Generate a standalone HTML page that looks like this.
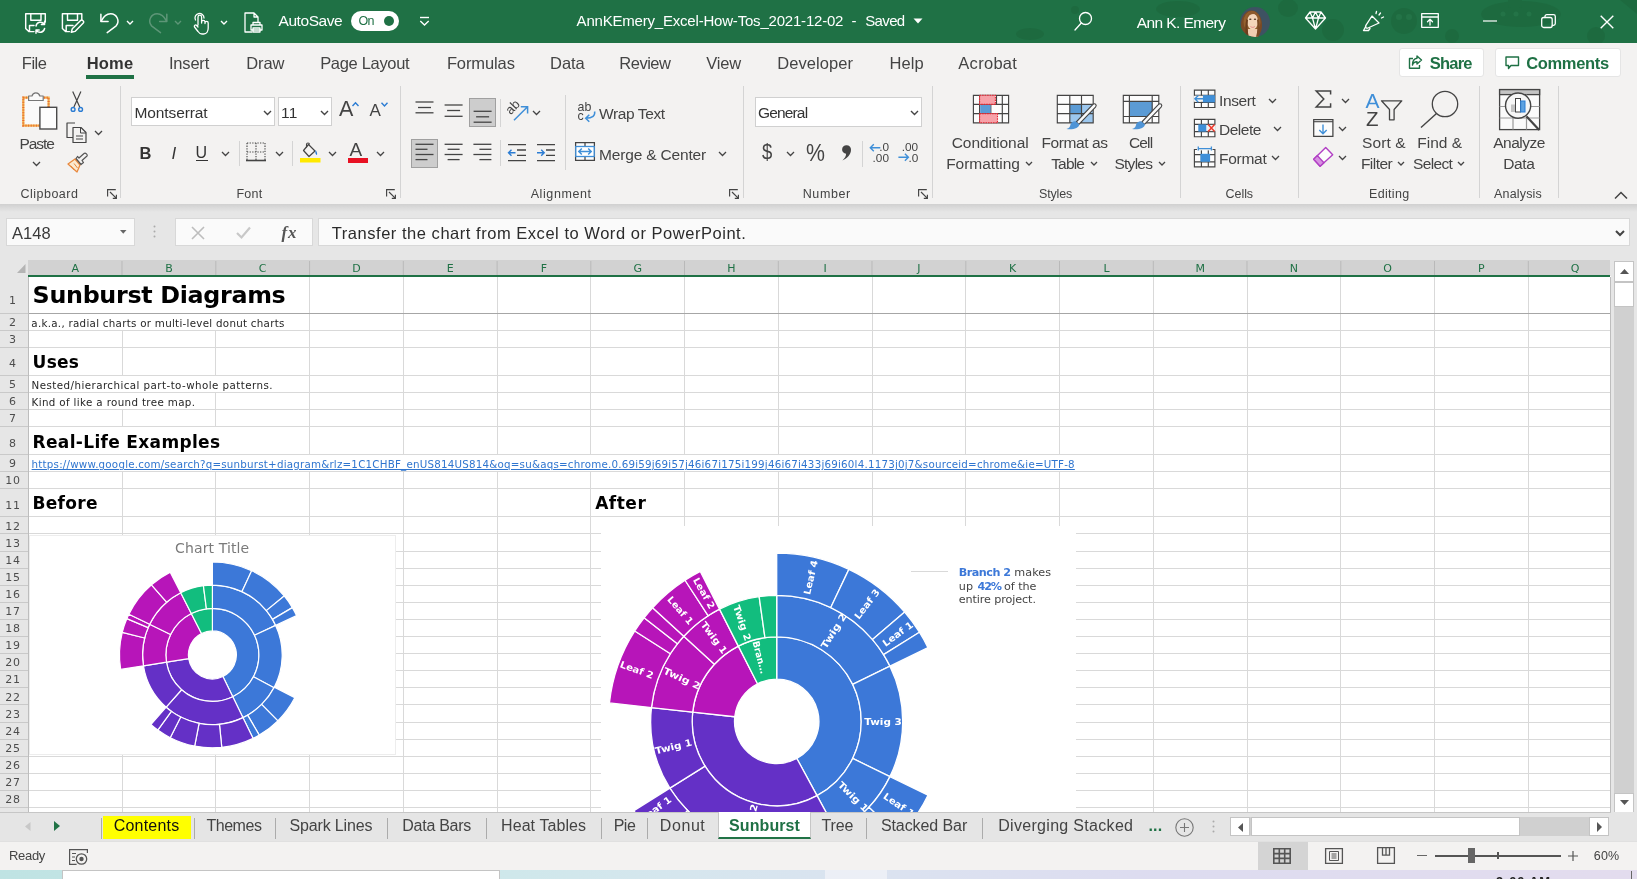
<!DOCTYPE html>
<html lang="en"><head><meta charset="utf-8"><title>Excel - Sunburst</title>
<style>
html,body{margin:0;padding:0}
body{width:1637px;height:879px;overflow:hidden;position:relative;background:#fff;font-family:"Liberation Sans",sans-serif}
.t{position:absolute;white-space:pre;display:block}
.b{position:absolute;display:block}
svg{overflow:visible}
#app{position:absolute;left:0;top:0;width:1637px;height:879px;will-change:transform}
</style></head>
<body>
<div id="app">
<div class="b" style="left:0.0px;top:0.0px;width:1637.0px;height:43.4px;background:#1f7145;"></div>
<div class="b" style="left:0.0px;top:43.3px;width:1637.0px;height:160.9px;background:#f3f2f1;"></div>
<div class="b" style="left:0.0px;top:204.2px;width:1637.0px;height:7.8px;background:linear-gradient(#d0d0d0,#e6e6e6);"></div>
<div class="b" style="left:0.0px;top:212.0px;width:1637.0px;height:48.0px;background:#e6e6e6;"></div>
<svg class="b" style="left:0.0px;top:0.0px;overflow:hidden;" width="1637" height="43" viewBox="0 0 1637 43"><g fill="#1c653b" opacity=".55"><ellipse cx="1521" cy="14" rx="40" ry="13"/><rect x="1508" y="-4" width="14" height="12" rx="3"/><circle cx="1404" cy="21" r="13"/><circle cx="1333" cy="30" r="11"/><ellipse cx="1288" cy="8" rx="10" ry="9"/><ellipse cx="1178" cy="9" rx="22" ry="8"/><circle cx="1452" cy="36" r="7"/><circle cx="1596" cy="36" r="9"/><ellipse cx="1030" cy="34" rx="14" ry="6"/><circle cx="1075" cy="10" r="4"/><path d="M1620 0l17 0 0 14z"/></g><g fill="#2a7d4f" opacity=".5"><circle cx="1503" cy="14" r="2.500"/><circle cx="1516" cy="14" r="2.500"/><circle cx="1529" cy="14" r="2.500"/><circle cx="1399" cy="17" r="3"/><circle cx="1409" cy="17" r="3"/></g></svg>
<svg class="b" style="left:0.0px;top:0.0px;" width="1" height="1" viewBox="0 0 1 1"><g fill="none" stroke="#fff" stroke-width="1.45" stroke-linejoin="round" stroke-linecap="round"><path d="M45.300 22V13.700H25.700V28.500L28.800 31.600H34M30.800 13.700V20.200H41V13.700M29.500 31.600V25.500H34"/><path d="M36 26a4.600 4.600 0 0 1 8.300-1.800M44.600 21.300v3.200h-3.200M44.600 28.500a4.600 4.600 0 0 1-8.300 1.800M36 33.300v-3.200h3.200"/></g></svg>
<svg class="b" style="left:0.0px;top:0.0px;" width="1" height="1" viewBox="0 0 1 1"><g fill="none" stroke="#fff" stroke-width="1.45" stroke-linejoin="round" stroke-linecap="round"><path d="M81.800 20V13.700H62.400V28.500L65.500 31.600H69.500M67.500 13.700V20.200H77.500V13.700M66.200 31.600V25.500H73"/><path d="M71.300 32.300l1-3.600 8.300-8.300a1.400 1.400 0 0 1 2 0l.7.700a1.400 1.400 0 0 1 0 2L75 31.400z"/></g></svg>
<svg class="b" style="left:0.0px;top:0.0px;" width="1" height="1" viewBox="0 0 1 1"><g fill="none" stroke="#fff" stroke-width="1.5" stroke-linejoin="round" stroke-linecap="round"><path d="M100.900 14.300V21.500H108.100"/><path d="M101.200 21.200C103.500 16.500 107 13.800 110.600 13.800a7.300 7.300 0 0 1 5.600 12L107.200 32.600"/></g></svg>
<svg class="b" style="left:125.7px;top:19.5px;" width="8" height="5.0" viewBox="0 0 8 5.0"><path d="M1 1 L4.0 4.0 L7 1" fill="none" stroke="#fff" stroke-width="1.4"/></svg>
<svg class="b" style="left:0.0px;top:0.0px;" width="1" height="1" viewBox="0 0 1 1"><g fill="none" stroke="#5d9677" stroke-width="1.500" stroke-linecap="round" stroke-linejoin="round"><path d="M166.800 14.300V21.500H159.600"/><path d="M166.500 21.200C164.200 16.500 160.700 13.800 157.100 13.800a7.300 7.300 0 0 0-5.600 12L160.500 32.600"/></g></svg>
<svg class="b" style="left:174.3px;top:19.5px;" width="8" height="5.0" viewBox="0 0 8 5.0"><path d="M1 1 L4.0 4.0 L7 1" fill="none" stroke="#5d9677" stroke-width="1.4"/></svg>
<svg class="b" style="left:192.5px;top:12.5px;" width="17" height="22" viewBox="0 0 17 22"><g fill="none" stroke="#fff" stroke-width="1.3" stroke-linejoin="round" stroke-linecap="round"><path d="M5 12V4a1.800 1.800 0 0 1 3.600 0v6M8.600 9a1.700 1.700 0 0 1 3.400 0v1.500M12 10a1.600 1.600 0 0 1 3.200 0v5c0 3-1.500 6-4.500 6H9c-2 0-3-1-4-2.500L1.500 14c-.8-1.500 1-2.800 2.200-1.500L5 14"/><path d="M2.500 7A4.500 4.500 0 1 1 11 5"/></g></svg>
<svg class="b" style="left:219.6px;top:19.5px;" width="8" height="5.0" viewBox="0 0 8 5.0"><path d="M1 1 L4.0 4.0 L7 1" fill="none" stroke="#fff" stroke-width="1.4"/></svg>
<svg class="b" style="left:244.0px;top:12.0px;" width="19" height="21" viewBox="0 0 19 21"><g fill="none" stroke="#fff" stroke-width="1.3" stroke-linejoin="round" stroke-linecap="round"><path d="M8 20H1V1h9l4 4v5M10 1v4h4"/><path d="M7 13h11v5H7zM9 13v-2.500h7V13M9 16h7v4H9z"/></g></svg>
<span class="t" style="left:278.5px;top:13.2px;font-size:15.5px;line-height:15.5px;color:#fff;letter-spacing:-0.43px;">AutoSave</span>
<div class="b" style="left:350.6px;top:10.5px;width:48.1px;height:20.1px;background:#fff;border-radius:10.05px;"></div>
<span class="t" style="left:358.6px;top:14.7px;font-size:12.5px;line-height:12.5px;color:#1f7145;letter-spacing:-0.79px;">On</span>
<div class="b" style="left:384.0px;top:15.6px;width:10.0px;height:10.0px;background:#1f7145;border-radius:5px;"></div>
<svg class="b" style="left:419.0px;top:16.0px;" width="11" height="10" viewBox="0 0 11 10"><path d="M1 1.500h9" stroke="#fff" stroke-width="1.400"/><path d="M1.300 5l4.200 4 4.200-4" fill="none" stroke="#fff" stroke-width="1.400"/></svg>
<span class="t" style="left:576.6px;top:13.0px;font-size:15px;line-height:15px;color:#fff;letter-spacing:-0.20px;">AnnKEmery_Excel-How-Tos_2021-12-02</span>
<span class="t" style="left:851.5px;top:13.0px;font-size:15px;line-height:15px;color:#fff;letter-spacing:1.00px;">-</span>
<span class="t" style="left:865.2px;top:13.0px;font-size:15px;line-height:15px;color:#fff;letter-spacing:-0.63px;">Saved</span>
<svg class="b" style="left:912.5px;top:18.0px;" width="10" height="6" viewBox="0 0 10 6"><path d="M0.500 0.500h9L5 5.500z" fill="#fff"/></svg>
<svg class="b" style="left:1074.0px;top:11.0px;" width="19" height="20" viewBox="0 0 19 20"><g fill="none" stroke="#fff" stroke-width="1.3" stroke-linejoin="round" stroke-linecap="round"><circle cx="11.500" cy="7.500" r="6"/><path d="M7.300 12L1 19"/></g></svg>
<span class="t" style="left:1136.7px;top:14.5px;font-size:15.5px;line-height:15.5px;color:#fff;letter-spacing:-0.58px;">Ann K. Emery</span>
<svg class="b" style="left:1240.0px;top:6.5px;" width="30" height="30" viewBox="0 0 30 30"><defs><clipPath id="av"><circle cx="15" cy="15" r="15"/></clipPath></defs><g clip-path="url(#av)"><rect width="30" height="30" fill="#3e5262"/><ellipse cx="11.500" cy="18" rx="10.500" ry="14.500" fill="#7b4a24"/><ellipse cx="12" cy="15" rx="8.500" ry="11" fill="#93602f"/><path d="M8 22h9.500v9H8z" fill="#efcdb0"/><ellipse cx="12.600" cy="14.500" rx="5.400" ry="8.200" fill="#f4d6ba"/><path d="M6.500 13c0-6 3-8.500 6.500-8.500 3 0 5.500 2 6 7-1.500-3-3.500-4.500-6-4.500-3 0-5 2-6.500 6z" fill="#8d5a2c"/><ellipse cx="10.300" cy="12.300" rx="1.200" ry=".8" fill="#4a3424"/><ellipse cx="15" cy="12.300" rx="1.200" ry=".8" fill="#4a3424"/><path d="M10.500 19.500c1.500 1.200 3 1.200 4.300 0" stroke="#e58a8a" stroke-width="1" fill="none"/><path d="M18.500 12c1.500 5 1.500 12 .5 18h-3c1.500-5 2-11 1-17z" fill="#7b4a24"/><path d="M6.500 12c-1.500 5-1.500 12-.500 18h3c-1.500-5-2-11-1-17z" fill="#6b3d1c"/></g></svg>
<svg class="b" style="left:1304.5px;top:11.0px;" width="21" height="19" viewBox="0 0 21 19"><g fill="none" stroke="#fff" stroke-width="1.3" stroke-linejoin="round" stroke-linecap="round"><path d="M5 1h11l4.500 6L10.500 18 .5 7zM.5 7h20M5 1l2.500 6 3 11 3-11L16 1M7.500 7l3-6 3 6"/></g></svg>
<svg class="b" style="left:1362.0px;top:10.0px;" width="23" height="22" viewBox="0 0 23 22"><g fill="none" stroke="#fff" stroke-width="1.3" stroke-linejoin="round" stroke-linecap="round"><path d="M10 6l7 7-11 5c-1.500.7-3-.8-2.300-2.300zM4 16l-2.500 4.500h5L8 18.500"/><path d="M17 5l1.500-2M19.500 8l2-1M14 3.500l.5-2"/></g></svg>
<svg class="b" style="left:1421.0px;top:13.0px;" width="18" height="15" viewBox="0 0 18 15"><g fill="none" stroke="#fff" stroke-width="1.3" stroke-linejoin="round" stroke-linecap="round"><path d="M.7.7h16.600v13.600H.7zM.7 4h16.600"/><path d="M9 12V6.500M6.500 8.800L9 6.300l2.500 2.500"/></g></svg>
<svg class="b" style="left:1483.0px;top:20.0px;" width="14" height="2" viewBox="0 0 14 2"><path d="M0 1h14" stroke="#fff" stroke-width="1.200"/></svg>
<svg class="b" style="left:1540.5px;top:14.0px;" width="15" height="14" viewBox="0 0 15 14"><g fill="none" stroke="#fff" stroke-width="1.3" stroke-linejoin="round" stroke-linecap="round"><rect x=".7" y="3.500" width="10.500" height="10" rx="2"/><path d="M4 3.500V2.500a1.800 1.800 0 0 1 1.800-1.800h6.700a1.800 1.800 0 0 1 1.800 1.800v7a1.800 1.800 0 0 1-1.800 1.800h-1.300"/></g></svg>
<svg class="b" style="left:1600.0px;top:14.5px;" width="14" height="14" viewBox="0 0 14 14"><path d="M.7.7l12.600 12.600M13.300.7L.7 13.300" stroke="#fff" stroke-width="1.400"/></svg>
<span class="t" style="left:21.8px;top:55.3px;font-size:16.5px;line-height:16.5px;color:#444;letter-spacing:-0.50px;">File</span>
<span class="t" style="left:169.0px;top:55.3px;font-size:16.5px;line-height:16.5px;color:#444;letter-spacing:-0.21px;">Insert</span>
<span class="t" style="left:246.3px;top:55.3px;font-size:16.5px;line-height:16.5px;color:#444;letter-spacing:-0.13px;">Draw</span>
<span class="t" style="left:320.2px;top:55.3px;font-size:16.5px;line-height:16.5px;color:#444;letter-spacing:-0.32px;">Page Layout</span>
<span class="t" style="left:446.9px;top:55.3px;font-size:16.5px;line-height:16.5px;color:#444;letter-spacing:-0.11px;">Formulas</span>
<span class="t" style="left:550.0px;top:55.3px;font-size:16.5px;line-height:16.5px;color:#444;letter-spacing:-0.04px;">Data</span>
<span class="t" style="left:619.3px;top:55.3px;font-size:16.5px;line-height:16.5px;color:#444;letter-spacing:-0.50px;">Review</span>
<span class="t" style="left:706.3px;top:55.3px;font-size:16.5px;line-height:16.5px;color:#444;letter-spacing:-0.19px;">View</span>
<span class="t" style="left:777.2px;top:55.3px;font-size:16.5px;line-height:16.5px;color:#444;letter-spacing:0.09px;">Developer</span>
<span class="t" style="left:889.5px;top:55.3px;font-size:16.5px;line-height:16.5px;color:#444;letter-spacing:0.07px;">Help</span>
<span class="t" style="left:958.3px;top:55.3px;font-size:16.5px;line-height:16.5px;color:#444;letter-spacing:0.29px;">Acrobat</span>
<span class="t" style="left:86.7px;top:55.3px;font-size:16.5px;line-height:16.5px;color:#333;letter-spacing:0.21px;font-weight:700;">Home</span>
<div class="b" style="left:86.4px;top:75.3px;width:48.0px;height:3.3px;background:#1f7145;"></div>
<div class="b" style="left:1398.8px;top:47.7px;width:85.4px;height:29.6px;background:#fff;border:1px solid #e5e5e5;box-sizing:border-box;border-radius:3px;"></div>
<div class="b" style="left:1495.3px;top:47.7px;width:126.0px;height:29.6px;background:#fff;border:1px solid #e5e5e5;box-sizing:border-box;border-radius:3px;"></div>
<svg class="b" style="left:1408.0px;top:55.0px;" width="15" height="14" viewBox="0 0 15 14"><g fill="none" stroke="#1f7145" stroke-width="1.400" stroke-linejoin="round"><path d="M5 3.500H1.500v9.800h10V10"/><path d="M9 1l4.500 4L9 9V6.800C6.500 6.800 5 8 4.500 10 4.500 6 6 3.500 9 3.200z"/></g></svg>
<span class="t" style="left:1429.7px;top:54.9px;font-size:16.5px;line-height:16.5px;color:#1f7145;letter-spacing:-0.77px;font-weight:700;">Share</span>
<svg class="b" style="left:1505.0px;top:55.5px;" width="15" height="14" viewBox="0 0 15 14"><path d="M1 1h12.500v8.500H6L3.500 12.500V9.500H1z" fill="none" stroke="#1f7145" stroke-width="1.400" stroke-linejoin="round"/></svg>
<span class="t" style="left:1526.2px;top:54.9px;font-size:16.5px;line-height:16.5px;color:#1f7145;letter-spacing:-0.33px;font-weight:700;">Comments</span>
<div class="b" style="left:120.0px;top:86.0px;width:1.0px;height:111.5px;background:#d4d4d4;"></div>
<div class="b" style="left:399.8px;top:86.0px;width:1.0px;height:111.5px;background:#d4d4d4;"></div>
<div class="b" style="left:743.4px;top:86.0px;width:1.0px;height:111.5px;background:#d4d4d4;"></div>
<div class="b" style="left:931.9px;top:86.0px;width:1.0px;height:111.5px;background:#d4d4d4;"></div>
<div class="b" style="left:1180.1px;top:86.0px;width:1.0px;height:111.5px;background:#d4d4d4;"></div>
<div class="b" style="left:1298.1px;top:86.0px;width:1.0px;height:111.5px;background:#d4d4d4;"></div>
<div class="b" style="left:1479.1px;top:86.0px;width:1.0px;height:111.5px;background:#d4d4d4;"></div>
<div class="b" style="left:1557.8px;top:86.0px;width:1.0px;height:111.5px;background:#d4d4d4;"></div>
<svg class="b" style="left:0.0px;top:0.0px;" width="1" height="1" viewBox="0 0 1 1"><rect x="23.300" y="97.600" width="25.300" height="28" fill="#fafafa" stroke="#f2b24a" stroke-width="2.200"/><rect x="23.300" y="97.600" width="25.300" height="28" fill="none" stroke="#e5502a" stroke-width="2.200" stroke-dasharray="1 1.600" opacity=".75"/><path d="M28.600 100.500V96h3.400a4 4 0 0 1 7.800 0h3.400v4.500z" fill="#fafafa" stroke="#777" stroke-width="1.200" stroke-linejoin="round"/><rect x="39.900" y="107.300" width="16.800" height="21.700" fill="#fdfdfd" stroke="#4a4a4a" stroke-width="1.400"/></svg>
<span class="t" style="left:19.6px;top:136.1px;font-size:15.5px;line-height:15.5px;color:#444;letter-spacing:-1.11px;">Paste</span>
<svg class="b" style="left:31.5px;top:160.8px;" width="9" height="5.5" viewBox="0 0 9 5.5"><path d="M1 1 L4.5 4.5 L8 1" fill="none" stroke="#444" stroke-width="1.3"/></svg>
<svg class="b" style="left:0.0px;top:0.0px;" width="1" height="1" viewBox="0 0 1 1"><path d="M72.700 91.500l7 15.500M80.900 91.500l-7 15.500" stroke="#444" stroke-width="1.200" fill="none"/><circle cx="73.100" cy="109.400" r="1.900" fill="none" stroke="#2b7cd3" stroke-width="1.400"/><circle cx="80.600" cy="109.400" r="1.900" fill="none" stroke="#2b7cd3" stroke-width="1.400"/></svg>
<svg class="b" style="left:66.0px;top:122.0px;" width="23" height="21" viewBox="0 0 23 21"><g fill="none" stroke="#444" stroke-width="1.2" stroke-linejoin="round" stroke-linecap="butt"><path d="M7 15.500H1V1h8M7 5.500h8l5 5V20.500H7z" fill="#f3f2f1"/><path d="M14.500 5.500v5.500h5.500M10 14h7M10 17h7" stroke-width="1"/></g></svg>
<svg class="b" style="left:94.0px;top:130.2px;" width="9" height="5.5" viewBox="0 0 9 5.5"><path d="M1 1 L4.5 4.5 L8 1" fill="none" stroke="#444" stroke-width="1.3"/></svg>
<svg class="b" style="left:66.0px;top:151.0px;" width="23" height="22" viewBox="0 0 23 22"><path d="M2 13l7-5 5 6-3 7z" fill="#fbe9cf" stroke="#e8883d" stroke-width="1.300" stroke-linejoin="round"/><path d="M5 15l3 4M8 12.500l3.500 4.500" stroke="#e8883d" stroke-width="1"/><path d="M10 7.500l5 6 2.500-2-1.500-2 5-4.500c1-1-1.500-4-3-2.500l-5 4.500-1.500-1.500z" fill="#f3f2f1" stroke="#555" stroke-width="1.200" stroke-linejoin="round"/></svg>
<span class="t" style="left:20.5px;top:187.6px;font-size:12.5px;line-height:12.5px;color:#444;letter-spacing:0.48px;">Clipboard</span>
<svg class="b" style="left:106.5px;top:188.8px;" width="10" height="10" viewBox="0 0 10 10"><path d="M.6 7.500V.6h8.200M3 3l6.200 6.200M5.800 9.400h3.600V5.800" fill="none" stroke="#444" stroke-width="1.150"/></svg>
<div class="b" style="left:131.0px;top:97.3px;width:144.3px;height:29.2px;background:#fff;border:1px solid #d0d0d0;box-sizing:border-box;"></div>
<div class="b" style="left:278.0px;top:97.3px;width:54.3px;height:29.2px;background:#fff;border:1px solid #d0d0d0;box-sizing:border-box;"></div>
<span class="t" style="left:134.5px;top:105.4px;font-size:15.5px;line-height:15.5px;color:#333;letter-spacing:-0.11px;">Montserrat</span>
<svg class="b" style="left:263.0px;top:110.2px;" width="9" height="5.5" viewBox="0 0 9 5.5"><path d="M1 1 L4.5 4.5 L8 1" fill="none" stroke="#444" stroke-width="1.4"/></svg>
<span class="t" style="left:281.0px;top:105.4px;font-size:15.5px;line-height:15.5px;color:#333;letter-spacing:0.20px;">11</span>
<svg class="b" style="left:319.5px;top:110.2px;" width="9" height="5.5" viewBox="0 0 9 5.5"><path d="M1 1 L4.5 4.5 L8 1" fill="none" stroke="#444" stroke-width="1.4"/></svg>
<span class="t" style="left:339.0px;top:98.6px;font-size:21.5px;line-height:21.5px;color:#444;letter-spacing:-0.34px;">A</span>
<svg class="b" style="left:351.5px;top:102.3px;" width="7" height="4.5" viewBox="0 0 7 4.5"><path d="M.5 4L3.500.8 6.500 4" fill="none" stroke="#2b7cd3" stroke-width="1.400"/></svg>
<span class="t" style="left:369.5px;top:102.4px;font-size:17px;line-height:17px;color:#444;letter-spacing:0.16px;">A</span>
<svg class="b" style="left:380.5px;top:102.0px;" width="7" height="4.5" viewBox="0 0 7 4.5"><path d="M.5.8L3.500 4 6.500.8" fill="none" stroke="#2b7cd3" stroke-width="1.400"/></svg>
<span class="t" style="left:139.5px;top:145.0px;font-size:16.5px;line-height:16.5px;color:#333;letter-spacing:-0.92px;font-weight:700;">B</span>
<span class="t" style="left:171.5px;top:144.6px;font-size:17px;line-height:17px;color:#333;letter-spacing:0.78px;font-style:italic;">I</span>
<span class="t" style="left:195.5px;top:144.5px;font-size:16px;line-height:16px;color:#333;letter-spacing:0.45px;">U</span>
<div class="b" style="left:195.5px;top:160.0px;width:12.0px;height:1.2px;background:#333;"></div>
<svg class="b" style="left:220.5px;top:150.8px;" width="9" height="5.5" viewBox="0 0 9 5.5"><path d="M1 1 L4.5 4.5 L8 1" fill="none" stroke="#444" stroke-width="1.3"/></svg>
<div class="b" style="left:239.0px;top:141.0px;width:1.0px;height:25.0px;background:#d4d4d4;"></div>
<svg class="b" style="left:246.0px;top:142.0px;" width="20" height="20" viewBox="0 0 20 20"><path d="M1 1h18M1 10h18M10 1v17M1 1v17M19 1v17" stroke="#4a4a4a" stroke-width="1.150" stroke-dasharray="1.300 1.300" fill="none"/><path d="M0 18.500h20" stroke="#444" stroke-width="1.600"/></svg>
<svg class="b" style="left:274.5px;top:150.8px;" width="9" height="5.5" viewBox="0 0 9 5.5"><path d="M1 1 L4.5 4.5 L8 1" fill="none" stroke="#444" stroke-width="1.3"/></svg>
<div class="b" style="left:292.0px;top:141.0px;width:1.0px;height:25.0px;background:#d4d4d4;"></div>
<svg class="b" style="left:300.0px;top:142.0px;" width="21" height="21" viewBox="0 0 21 21"><path d="M8.500 2.500l6.500 6.500-6 5.500-5.500-6z" fill="none" stroke="#444" stroke-width="1.200" stroke-linejoin="round"/><path d="M6.500 5.500V2.500a1.500 1.500 0 0 1 3 0" fill="none" stroke="#444" stroke-width="1.100"/><path d="M15.500 8c1 1 2 3 1.500 5-1.500-.5-2-2-1.500-5z" fill="#2b7cd3"/><rect x="0" y="16" width="20.500" height="4.500" fill="#ffe900"/></svg>
<svg class="b" style="left:328.0px;top:150.8px;" width="9" height="5.5" viewBox="0 0 9 5.5"><path d="M1 1 L4.5 4.5 L8 1" fill="none" stroke="#444" stroke-width="1.3"/></svg>
<span class="t" style="left:349.5px;top:139.9px;font-size:19px;line-height:19px;color:#444;letter-spacing:3.33px;">A</span>
<div class="b" style="left:347.5px;top:158.0px;width:20.5px;height:4.5px;background:#e81123;"></div>
<svg class="b" style="left:375.5px;top:150.8px;" width="9" height="5.5" viewBox="0 0 9 5.5"><path d="M1 1 L4.5 4.5 L8 1" fill="none" stroke="#444" stroke-width="1.3"/></svg>
<span class="t" style="left:236.5px;top:187.6px;font-size:12.5px;line-height:12.5px;color:#444;letter-spacing:0.20px;">Font</span>
<svg class="b" style="left:385.5px;top:188.8px;" width="10" height="10" viewBox="0 0 10 10"><path d="M.6 7.500V.6h8.200M3 3l6.200 6.200M5.800 9.400h3.600V5.800" fill="none" stroke="#444" stroke-width="1.150"/></svg>
<div class="b" style="left:469.4px;top:98.3px;width:26.3px;height:28.5px;background:#cdcdcd;border:1px solid #a0a0a0;box-sizing:border-box;"></div>
<div class="b" style="left:411.3px;top:139.4px;width:26.7px;height:28.3px;background:#cdcdcd;border:1px solid #a0a0a0;box-sizing:border-box;"></div>
<svg class="b" style="left:0.0px;top:0.0px;" width="1" height="1" viewBox="0 0 1 1"><path d="M415.5 102h18" stroke="#444" stroke-width="1.300"/><path d="M418.0 107.5h13" stroke="#444" stroke-width="1.300"/><path d="M415.5 112.8h18" stroke="#444" stroke-width="1.300"/></svg>
<svg class="b" style="left:0.0px;top:0.0px;" width="1" height="1" viewBox="0 0 1 1"><path d="M444.6 105h18" stroke="#444" stroke-width="1.300"/><path d="M447.1 110.5h13" stroke="#444" stroke-width="1.300"/><path d="M444.6 116.3h18" stroke="#444" stroke-width="1.300"/></svg>
<svg class="b" style="left:0.0px;top:0.0px;" width="1" height="1" viewBox="0 0 1 1"><path d="M473.6 111.3h18" stroke="#444" stroke-width="1.300"/><path d="M476.1 116.8h13" stroke="#444" stroke-width="1.300"/><path d="M473.6 122.2h18" stroke="#444" stroke-width="1.300"/></svg>
<svg class="b" style="left:0.0px;top:0.0px;" width="1" height="1" viewBox="0 0 1 1"><path d="M415.5 144.3h18" stroke="#444" stroke-width="1.300"/><path d="M415.5 149.3h12" stroke="#444" stroke-width="1.300"/><path d="M415.5 154.5h18" stroke="#444" stroke-width="1.300"/><path d="M415.5 159.6h12" stroke="#444" stroke-width="1.300"/></svg>
<svg class="b" style="left:0.0px;top:0.0px;" width="1" height="1" viewBox="0 0 1 1"><path d="M444.6 144.3h18" stroke="#444" stroke-width="1.300"/><path d="M447.6 149.3h12" stroke="#444" stroke-width="1.300"/><path d="M444.6 154.5h18" stroke="#444" stroke-width="1.300"/><path d="M447.6 159.6h12" stroke="#444" stroke-width="1.300"/></svg>
<svg class="b" style="left:0.0px;top:0.0px;" width="1" height="1" viewBox="0 0 1 1"><path d="M473.4 144.3h18" stroke="#444" stroke-width="1.300"/><path d="M479.4 149.3h12" stroke="#444" stroke-width="1.300"/><path d="M473.4 154.5h18" stroke="#444" stroke-width="1.300"/><path d="M479.4 159.6h12" stroke="#444" stroke-width="1.300"/></svg>
<div class="b" style="left:500.2px;top:98.5px;width:1.0px;height:28.0px;background:#d4d4d4;"></div>
<div class="b" style="left:500.2px;top:140.0px;width:1.0px;height:26.0px;background:#d4d4d4;"></div>
<svg class="b" style="left:0.0px;top:0.0px;" width="1" height="1" viewBox="0 0 1 1"><text x="510.800" y="115.300" transform="rotate(-47 510.800 115.300)" font-size="13" fill="#444" font-family="Liberation Sans,sans-serif">ab</text><path d="M514 120.300L527.300 107M520.800 106.700h6.800v6.800" fill="none" stroke="#3f8fd8" stroke-width="1.500"/></svg>
<svg class="b" style="left:532.0px;top:109.8px;" width="9" height="5.5" viewBox="0 0 9 5.5"><path d="M1 1 L4.5 4.5 L8 1" fill="none" stroke="#444" stroke-width="1.3"/></svg>
<svg class="b" style="left:508.0px;top:142.0px;" width="18" height="21" viewBox="0 0 18 21"><path d="M0 2.600h18M9 8h9M9 13.400h9M0 18.600h18" stroke="#444" stroke-width="1.300"/><path d="M.5 10.700h7M3.500 7.700l-3 3 3 3" fill="none" stroke="#2b7cd3" stroke-width="1.400"/></svg>
<svg class="b" style="left:537.3px;top:142.0px;" width="18" height="21" viewBox="0 0 18 21"><path d="M0 2.600h18M9 8h9M9 13.400h9M0 18.600h18" stroke="#444" stroke-width="1.300"/><path d="M0 10.700h7M4.200 7.700l3 3-3 3" fill="none" stroke="#2b7cd3" stroke-width="1.400"/></svg>
<div class="b" style="left:564.8px;top:95.0px;width:1.0px;height:75.0px;background:#d4d4d4;"></div>
<svg class="b" style="left:0.0px;top:0.0px;" width="1" height="1" viewBox="0 0 1 1"><text x="577.600" y="110.700" font-size="12.400" fill="#444" font-family="Liberation Sans,sans-serif">ab</text><text x="577.600" y="120.400" font-size="12.400" fill="#444" font-family="Liberation Sans,sans-serif">c</text><path d="M594.600 111.500c.8 3.800-2 6.800-8.600 6.800M589.300 114.800l-3.600 3.500 3.600 3.500" fill="none" stroke="#3f8fd8" stroke-width="1.500"/></svg>
<span class="t" style="left:599.0px;top:105.7px;font-size:15.5px;line-height:15.5px;color:#444;letter-spacing:-0.39px;">Wrap Text</span>
<svg class="b" style="left:574.5px;top:142.4px;" width="20" height="19" viewBox="0 0 20 19"><rect x=".6" y=".6" width="18.800" height="17.800" fill="#fcfcfc"/><path d="M.6.6h18.800v17.800H.6zM10 .6v4M10 14.400v4" fill="none" stroke="#444" stroke-width="1.250"/><rect x=".8" y="4.500" width="18.400" height="10" fill="#fff" stroke="#3f8fd8" stroke-width="1.300"/><path d="M3.800 9.500h12.400M6.800 6.500l-3 3 3 3M13.200 6.500l3 3-3 3" fill="none" stroke="#3f8fd8" stroke-width="1.500"/></svg>
<span class="t" style="left:599.0px;top:146.5px;font-size:15.5px;line-height:15.5px;color:#444;letter-spacing:-0.17px;">Merge &amp; Center</span>
<svg class="b" style="left:718.1px;top:150.8px;" width="9" height="5.5" viewBox="0 0 9 5.5"><path d="M1 1 L4.5 4.5 L8 1" fill="none" stroke="#444" stroke-width="1.3"/></svg>
<span class="t" style="left:530.7px;top:187.6px;font-size:12.5px;line-height:12.5px;color:#444;letter-spacing:0.59px;">Alignment</span>
<svg class="b" style="left:729.0px;top:188.8px;" width="10" height="10" viewBox="0 0 10 10"><path d="M.6 7.500V.6h8.200M3 3l6.200 6.200M5.800 9.400h3.600V5.800" fill="none" stroke="#444" stroke-width="1.150"/></svg>
<div class="b" style="left:754.6px;top:97.3px;width:167.6px;height:29.4px;background:#fff;border:1px solid #d0d0d0;box-sizing:border-box;"></div>
<span class="t" style="left:757.9px;top:104.8px;font-size:15.5px;line-height:15.5px;color:#333;letter-spacing:-0.82px;">General</span>
<svg class="b" style="left:910.0px;top:110.2px;" width="9" height="5.5" viewBox="0 0 9 5.5"><path d="M1 1 L4.5 4.5 L8 1" fill="none" stroke="#444" stroke-width="1.4"/></svg>
<span class="t" style="left:762.3px;top:141.3px;font-size:22.5px;line-height:22.5px;color:#444;letter-spacing:0.00px;transform:scaleX(.82);transform-origin:0 0;">$</span>
<svg class="b" style="left:785.8px;top:150.8px;" width="9" height="5.5" viewBox="0 0 9 5.5"><path d="M1 1 L4.5 4.5 L8 1" fill="none" stroke="#444" stroke-width="1.3"/></svg>
<span class="t" style="left:806.3px;top:140.9px;font-size:24.5px;line-height:24.5px;color:#444;letter-spacing:0.00px;transform:scaleX(.87);transform-origin:0 0;">%</span>
<svg class="b" style="left:840.5px;top:145.2px;" width="11" height="17" viewBox="0 0 11 17"><path d="M5.600 .2a4.300 4.300 0 0 1 4.400 4.500c0 4.600-3.400 8.500-8.600 10.800 2.400-2.300 3.700-4.300 3.700-6.800A4.100 4.100 0 0 1 5.600 .2z" fill="#444"/></svg>
<div class="b" style="left:861.8px;top:140.5px;width:1.0px;height:26.0px;background:#d4d4d4;"></div>
<svg class="b" style="left:0.0px;top:0.0px;" width="1" height="1" viewBox="0 0 1 1"><path d="M870.300 147.800h10M873.800 144.300l-3.500 3.500 3.500 3.500" fill="none" stroke="#3f8fd8" stroke-width="1.400"/><text x="879.300" y="151" font-size="11.800" fill="#444" font-family="Liberation Sans,sans-serif">.0</text><text x="872.600" y="162" font-size="11.800" fill="#444" font-family="Liberation Sans,sans-serif">.00</text></svg>
<svg class="b" style="left:0.0px;top:0.0px;" width="1" height="1" viewBox="0 0 1 1"><text x="901.700" y="151" font-size="11.800" fill="#444" font-family="Liberation Sans,sans-serif">.00</text><path d="M898.400 157.300h10M904.900 153.800l3.500 3.500-3.500 3.500" fill="none" stroke="#3f8fd8" stroke-width="1.400"/><text x="908.400" y="162" font-size="11.800" fill="#444" font-family="Liberation Sans,sans-serif">.0</text></svg>
<span class="t" style="left:802.7px;top:187.6px;font-size:12.5px;line-height:12.5px;color:#444;letter-spacing:0.61px;">Number</span>
<svg class="b" style="left:917.5px;top:188.8px;" width="10" height="10" viewBox="0 0 10 10"><path d="M.6 7.500V.6h8.200M3 3l6.200 6.200M5.800 9.400h3.600V5.800" fill="none" stroke="#444" stroke-width="1.150"/></svg>
<svg class="b" style="left:0.0px;top:0.0px;" width="1" height="1" viewBox="0 0 1 1"><rect x="973.400" y="95.300" width="35.200" height="27.500" fill="#fcfcfc"/><path d="M973.400 95.300h35.200v27.500h-35.200zM973.400 104.400h35.200M973.400 113.600h35.200M979.600 95.300v27.500M990.800 104.400v9.200M1002.300 95.300v27.500M996.500 95.300v9.100" fill="none" stroke="#444" stroke-width="1.150"/><rect x="979.600" y="95.300" width="15.800" height="9.100" fill="#f7a1a8" stroke="#e8222e" stroke-width="1.100" stroke-dasharray="1.600 .9"/><rect x="979.600" y="113.600" width="17.900" height="9.200" fill="#f7a1a8" stroke="#e8222e" stroke-width="1.100" stroke-dasharray="1.600 .9"/><rect x="980.200" y="105" width="10.400" height="8" fill="#5b9bd5"/></svg>
<span class="t" style="left:951.7px;top:135.1px;font-size:15.5px;line-height:15.5px;color:#444;letter-spacing:-0.06px;">Conditional</span>
<span class="t" style="left:946.2px;top:155.7px;font-size:15.5px;line-height:15.5px;color:#444;letter-spacing:-0.05px;">Formatting</span>
<svg class="b" style="left:1025.2px;top:160.5px;" width="8" height="5.0" viewBox="0 0 8 5.0"><path d="M1 1 L4.0 4.0 L7 1" fill="none" stroke="#444" stroke-width="1.3"/></svg>
<svg class="b" style="left:0.0px;top:0.0px;" width="1" height="1" viewBox="0 0 1 1"><rect x="1057.300" y="95.300" width="35.900" height="27.500" fill="#fcfcfc"/><rect x="1069.800" y="104.400" width="23.400" height="18.400" fill="#9cc7ee"/><rect x="1069.800" y="104.400" width="11.700" height="9.200" fill="#5b9bd5"/><path d="M1057.300 95.300h35.900v27.500h-35.900zM1057.300 104.400h35.900M1057.300 113.600h35.900M1069.800 95.300v27.500M1081.500 95.300v27.500" fill="none" stroke="#444" stroke-width="1.150"/><path d="M1095.6 104.200c.8.800.700 2-.100 3L1078.9 124.300l-2.700-2.300L1092.7 104.700c.800-.900 2-1.200 2.900-.500z" fill="#fafafa" stroke="#444" stroke-width="1.100" stroke-linejoin="round"/><path d="M1075.6 121.200l3.800 3.300c-.600 3.400-5.400 5.400-13 4.600 3.200-1.200 3.600-2.700 4.100-4.700.600-2 2.700-3.400 5.100-3.200z" fill="#4f94d6"/></svg>
<span class="t" style="left:1041.5px;top:135.1px;font-size:15.5px;line-height:15.5px;color:#444;letter-spacing:-0.42px;">Format as</span>
<span class="t" style="left:1051.2px;top:155.7px;font-size:15.5px;line-height:15.5px;color:#444;letter-spacing:-0.83px;">Table</span>
<svg class="b" style="left:1089.8px;top:160.5px;" width="8" height="5.0" viewBox="0 0 8 5.0"><path d="M1 1 L4.0 4.0 L7 1" fill="none" stroke="#444" stroke-width="1.3"/></svg>
<svg class="b" style="left:0.0px;top:0.0px;" width="1" height="1" viewBox="0 0 1 1"><rect x="1123.300" y="95.300" width="35.500" height="27.500" fill="#fcfcfc"/><rect x="1129.400" y="101.400" width="22.800" height="15.100" fill="#5b9bd5"/><path d="M1123.300 95.300h35.500v27.500h-35.500zM1123.300 101.400h35.500M1123.300 116.500h35.500M1129.400 95.300v27.500M1152.200 95.300v27.500" fill="none" stroke="#444" stroke-width="1.150"/><path d="M1161.2 104.200c.8.800.700 2-.100 3L1144.5 124.300l-2.700-2.300L1158.3 104.700c.800-.900 2-1.200 2.900-.500z" fill="#fafafa" stroke="#444" stroke-width="1.100" stroke-linejoin="round"/><path d="M1141.2 121.200l3.800 3.300c-.600 3.400-5.400 5.400-13 4.600 3.200-1.200 3.600-2.700 4.100-4.700.600-2 2.700-3.400 5.100-3.200z" fill="#4f94d6"/></svg>
<span class="t" style="left:1129.0px;top:135.1px;font-size:15.5px;line-height:15.5px;color:#444;letter-spacing:-0.85px;">Cell</span>
<span class="t" style="left:1114.4px;top:155.7px;font-size:15.5px;line-height:15.5px;color:#444;letter-spacing:-0.72px;">Styles</span>
<svg class="b" style="left:1158.0px;top:160.5px;" width="8" height="5.0" viewBox="0 0 8 5.0"><path d="M1 1 L4.0 4.0 L7 1" fill="none" stroke="#444" stroke-width="1.3"/></svg>
<span class="t" style="left:1039.0px;top:187.6px;font-size:12.5px;line-height:12.5px;color:#444;letter-spacing:-0.17px;">Styles</span>
<svg class="b" style="left:0.0px;top:0.0px;" width="1" height="1" viewBox="0 0 1 1"><rect x="1194.4" y="90.1" width="20.5" height="17.400" fill="#fcfcfc"/><path d="M1194.4 90.1H1214.9V107.5H1194.4zM1194.4 95.2H1214.9M1194.4 102.4H1214.9M1201.400 90.1V107.5M1208.300 90.1V107.5" fill="none" stroke="#444" stroke-width="1.150"/><rect x="1193.500" y="95.800" width="9" height="6" fill="#f3f2f1"/><rect x="1202.900" y="95.200" width="12" height="7.200" fill="#3f8fd8"/><path d="M1194.900 98.800H1207M1198.300 95.400l-3.400 3.400 3.400 3.400" fill="none" stroke="#3f8fd8" stroke-width="1.400"/></svg>
<span class="t" style="left:1219.1px;top:93.4px;font-size:15.5px;line-height:15.5px;color:#444;letter-spacing:-0.41px;">Insert</span>
<svg class="b" style="left:1267.6px;top:97.8px;" width="9" height="5.5" viewBox="0 0 9 5.5"><path d="M1 1 L4.5 4.5 L8 1" fill="none" stroke="#444" stroke-width="1.3"/></svg>
<svg class="b" style="left:0.0px;top:0.0px;" width="1" height="1" viewBox="0 0 1 1"><rect x="1194.4" y="119.3" width="20.5" height="17.400" fill="#fcfcfc"/><path d="M1194.4 119.3H1214.9V136.7H1194.4zM1194.4 124.4H1214.9M1194.4 131.6H1214.9M1201.400 119.3V136.7M1208.300 119.3V136.7" fill="none" stroke="#444" stroke-width="1.150"/><rect x="1206.800" y="124.900" width="9" height="6.200" fill="#f3f2f1"/><rect x="1198.300" y="124.400" width="8" height="7.200" fill="#3f8fd8"/><path d="M1208.200 124.600l6.400 6.800M1214.600 124.600l-6.400 6.800" stroke="#f0392b" stroke-width="1.500"/></svg>
<span class="t" style="left:1219.0px;top:122.2px;font-size:15.5px;line-height:15.5px;color:#444;letter-spacing:-0.47px;">Delete</span>
<svg class="b" style="left:1272.7px;top:126.2px;" width="9" height="5.5" viewBox="0 0 9 5.5"><path d="M1 1 L4.5 4.5 L8 1" fill="none" stroke="#444" stroke-width="1.3"/></svg>
<svg class="b" style="left:0.0px;top:0.0px;" width="1" height="1" viewBox="0 0 1 1"><rect x="1194.4" y="149.5" width="20.5" height="17.400" fill="#fcfcfc"/><path d="M1194.4 149.5H1214.9V166.9H1194.4zM1194.4 154.6H1214.9M1194.4 161.8H1214.9M1201.400 149.5V166.9M1208.300 149.5V166.9" fill="none" stroke="#444" stroke-width="1.150"/><rect x="1200.400" y="153.800" width="9.700" height="8" fill="#3f8fd8"/><rect x="1197" y="146" width="15.500" height="4.400" fill="#f3f2f1"/><path d="M1198.300 148.600H1211.400M1198.300 146.600v4M1211.400 146.600v4" stroke="#3f8fd8" stroke-width="1.300" fill="none"/></svg>
<span class="t" style="left:1219.0px;top:150.7px;font-size:15.5px;line-height:15.5px;color:#444;letter-spacing:-0.27px;">Format</span>
<svg class="b" style="left:1271.3px;top:154.8px;" width="9" height="5.5" viewBox="0 0 9 5.5"><path d="M1 1 L4.5 4.5 L8 1" fill="none" stroke="#444" stroke-width="1.3"/></svg>
<span class="t" style="left:1225.5px;top:187.6px;font-size:12.5px;line-height:12.5px;color:#444;letter-spacing:-0.04px;">Cells</span>
<svg class="b" style="left:0.0px;top:0.0px;" width="1" height="1" viewBox="0 0 1 1"><path d="M1330.600 94.500V90.900H1316.200l7.600 8-7.600 8H1330.600v-3.600" fill="none" stroke="#444" stroke-width="1.500" stroke-linejoin="miter"/></svg>
<svg class="b" style="left:1340.8px;top:97.8px;" width="9" height="5.5" viewBox="0 0 9 5.5"><path d="M1 1 L4.5 4.5 L8 1" fill="none" stroke="#444" stroke-width="1.3"/></svg>
<svg class="b" style="left:0.0px;top:0.0px;" width="1" height="1" viewBox="0 0 1 1"><path d="M1313.700 119.500h19.200v16.800h-19.200z" fill="#fcfcfc" stroke="#444" stroke-width="1.250"/><path d="M1313.700 121.700h19.200" stroke="#444" stroke-width="1.100"/><path d="M1323 124.400v9M1319.300 130l3.700 3.700 3.700-3.700" fill="none" stroke="#3f8fd8" stroke-width="1.400"/></svg>
<svg class="b" style="left:1338.0px;top:126.2px;" width="9" height="5.5" viewBox="0 0 9 5.5"><path d="M1 1 L4.5 4.5 L8 1" fill="none" stroke="#444" stroke-width="1.3"/></svg>
<svg class="b" style="left:0.0px;top:0.0px;" width="1" height="1" viewBox="0 0 1 1"><path d="M1325.700 147.400l7 7.300-12.600 11.600-6.400-7.100z" fill="#fcfcfc" stroke="#b13fc4" stroke-width="1.400" stroke-linejoin="round"/><path d="M1317.400 155.600l6.500 7.200-3.800 3.500-6.400-7.100z" fill="#d791e2" stroke="#b13fc4" stroke-width="1.400" stroke-linejoin="round"/></svg>
<svg class="b" style="left:1338.0px;top:154.8px;" width="9" height="5.5" viewBox="0 0 9 5.5"><path d="M1 1 L4.5 4.5 L8 1" fill="none" stroke="#444" stroke-width="1.3"/></svg>
<svg class="b" style="left:1365.0px;top:92.0px;" width="38" height="36" viewBox="0 0 38 36"><text x="0.500" y="15.600" font-size="21" fill="#3f8fd8" font-family="Liberation Sans,sans-serif">A</text><text x="1" y="34.400" font-size="20.500" fill="#444" font-family="Liberation Sans,sans-serif">Z</text><path d="M16.500 8.800h20.300l-7.700 8.700v10.300h-4.600V17.500z" fill="none" stroke="#444" stroke-width="1.300" stroke-linejoin="round"/></svg>
<span class="t" style="left:1362.0px;top:135.3px;font-size:15.5px;line-height:15.5px;color:#444;letter-spacing:0.09px;">Sort &amp;</span>
<span class="t" style="left:1360.9px;top:156.2px;font-size:15.5px;line-height:15.5px;color:#444;letter-spacing:-0.52px;">Filter</span>
<svg class="b" style="left:1396.5px;top:160.5px;" width="8" height="5.0" viewBox="0 0 8 5.0"><path d="M1 1 L4.0 4.0 L7 1" fill="none" stroke="#444" stroke-width="1.3"/></svg>
<svg class="b" style="left:1420.0px;top:90.0px;" width="40" height="39" viewBox="0 0 40 39"><circle cx="25" cy="14" r="12.700" fill="none" stroke="#444" stroke-width="1.300"/><path d="M16.500 23.500L1 37.500" stroke="#444" stroke-width="1.400"/></svg>
<span class="t" style="left:1417.3px;top:135.3px;font-size:15.5px;line-height:15.5px;color:#444;letter-spacing:-0.02px;">Find &amp;</span>
<span class="t" style="left:1413.1px;top:156.2px;font-size:15.5px;line-height:15.5px;color:#444;letter-spacing:-0.66px;">Select</span>
<svg class="b" style="left:1456.6px;top:160.5px;" width="8" height="5.0" viewBox="0 0 8 5.0"><path d="M1 1 L4.0 4.0 L7 1" fill="none" stroke="#444" stroke-width="1.3"/></svg>
<span class="t" style="left:1369.0px;top:187.6px;font-size:12.5px;line-height:12.5px;color:#444;letter-spacing:0.33px;">Editing</span>
<svg class="b" style="left:1499.0px;top:88.5px;" width="42" height="42" viewBox="0 0 42 42"><rect x=".6" y=".6" width="40" height="40" fill="#fafafa" stroke="#444" stroke-width="1.300"/><rect x=".6" y=".6" width="40" height="5" fill="#c4c4c4" stroke="#444" stroke-width="1.300"/><path d="M.6 17.500h40M.6 29h40M14 5.600v35M27.500 5.600v35" stroke="#9a9a9a" stroke-width="1.200"/><circle cx="19.100" cy="16.600" r="12.600" fill="#f6f6f6" stroke="#444" stroke-width="1.400"/><rect x="12" y="15.500" width="4.500" height="7.500" fill="#c2c2c2"/><rect x="16.500" y="9.500" width="5" height="13.500" fill="#fff" stroke="#444" stroke-width="1"/><rect x="21.700" y="12" width="4.300" height="11" fill="#5ea2e0" stroke="#2b7cd3" stroke-width="1"/><path d="M27.600 27.500L40.200 41" stroke="#444" stroke-width="2.200"/></svg>
<span class="t" style="left:1493.2px;top:135.3px;font-size:15.5px;line-height:15.5px;color:#444;letter-spacing:-0.49px;">Analyze</span>
<span class="t" style="left:1503.3px;top:156.2px;font-size:15.5px;line-height:15.5px;color:#444;letter-spacing:-0.39px;">Data</span>
<span class="t" style="left:1494.0px;top:187.6px;font-size:12.5px;line-height:12.5px;color:#444;letter-spacing:0.18px;">Analysis</span>
<svg class="b" style="left:1613.5px;top:191.0px;" width="14" height="9" viewBox="0 0 14 9"><path d="M1 7.500L7 1.500l6 6" fill="none" stroke="#444" stroke-width="1.500"/></svg>
<div class="b" style="left:6.3px;top:217.8px;width:128.9px;height:28.7px;background:#fafafa;border:1px solid #d8d8d8;box-sizing:border-box;"></div>
<span class="t" style="left:12.0px;top:224.7px;font-size:16.5px;line-height:16.5px;color:#3a3a3a;letter-spacing:0.07px;">A148</span>
<svg class="b" style="left:120.0px;top:230.0px;" width="7" height="4" viewBox="0 0 7 4"><path d="M0 0h6.500L3.250 3.800z" fill="#666"/></svg>
<svg class="b" style="left:152.5px;top:225.0px;" width="3" height="13" viewBox="0 0 3 13"><circle cx="1.500" cy="1.500" r="1" fill="#aaa"/><circle cx="1.500" cy="6.500" r="1" fill="#aaa"/><circle cx="1.500" cy="11.500" r="1" fill="#aaa"/></svg>
<div class="b" style="left:174.6px;top:217.8px;width:138.4px;height:28.7px;background:#fafafa;border:1px solid #d8d8d8;box-sizing:border-box;"></div>
<svg class="b" style="left:190.5px;top:225.5px;" width="14" height="14" viewBox="0 0 14 14"><path d="M1 1l12 12M13 1L1 13" stroke="#bdbdbd" stroke-width="1.600"/></svg>
<svg class="b" style="left:236.0px;top:226.0px;" width="15" height="13" viewBox="0 0 15 13"><path d="M1 7l4.500 4.500L14 1.500" stroke="#c8c8c8" stroke-width="2.200" fill="none"/></svg>
<span class="t" style="left:281.5px;top:224.1px;font-size:17px;line-height:17px;color:#555;letter-spacing:0.92px;font-weight:700;font-style:italic;font-family:'Liberation Serif',serif;">fx</span>
<div class="b" style="left:317.6px;top:217.8px;width:1312.9px;height:28.7px;background:#fafafa;border:1px solid #d8d8d8;box-sizing:border-box;"></div>
<span class="t" style="left:331.8px;top:225.1px;font-size:16.5px;line-height:16.5px;color:#2b2b2b;letter-spacing:0.53px;">Transfer the chart from Excel to Word or PowerPoint.</span>
<svg class="b" style="left:1614.5px;top:229.5px;" width="10" height="7" viewBox="0 0 10 7"><path d="M1 1l4 4 4-4" stroke="#444" stroke-width="2" fill="none"/></svg>
<div class="b" style="left:0.0px;top:260.0px;width:1637.0px;height:552.3px;background:#e6e6e6;"></div>
<div class="b" style="left:28.3px;top:260.4px;width:1582.2px;height:16.1px;background:#d2d2d2;"></div>
<div class="b" style="left:28.3px;top:276.2px;width:1582.7px;height:536.0px;background:#fff;"></div>
<svg class="b" style="left:16.5px;top:264.0px;" width="9" height="9.5" viewBox="0 0 9 9.5"><path d="M8.500 0v9H0z" fill="#b4b4b4"/></svg>
<span class="t" style="left:71.4px;top:263.0px;font-size:11px;line-height:11px;color:#1f7145;letter-spacing:0.00px;font-family:'DejaVu Sans','Liberation Sans',sans-serif;">A</span>
<span class="t" style="left:165.2px;top:263.0px;font-size:11px;line-height:11px;color:#1f7145;letter-spacing:0.00px;font-family:'DejaVu Sans','Liberation Sans',sans-serif;">B</span>
<span class="t" style="left:258.8px;top:263.0px;font-size:11px;line-height:11px;color:#1f7145;letter-spacing:0.00px;font-family:'DejaVu Sans','Liberation Sans',sans-serif;">C</span>
<span class="t" style="left:352.2px;top:263.0px;font-size:11px;line-height:11px;color:#1f7145;letter-spacing:0.00px;font-family:'DejaVu Sans','Liberation Sans',sans-serif;">D</span>
<span class="t" style="left:446.7px;top:263.0px;font-size:11px;line-height:11px;color:#1f7145;letter-spacing:0.00px;font-family:'DejaVu Sans','Liberation Sans',sans-serif;">E</span>
<span class="t" style="left:540.8px;top:263.0px;font-size:11px;line-height:11px;color:#1f7145;letter-spacing:0.00px;font-family:'DejaVu Sans','Liberation Sans',sans-serif;">F</span>
<span class="t" style="left:633.4px;top:263.0px;font-size:11px;line-height:11px;color:#1f7145;letter-spacing:0.00px;font-family:'DejaVu Sans','Liberation Sans',sans-serif;">G</span>
<span class="t" style="left:727.3px;top:263.0px;font-size:11px;line-height:11px;color:#1f7145;letter-spacing:0.00px;font-family:'DejaVu Sans','Liberation Sans',sans-serif;">H</span>
<span class="t" style="left:823.6px;top:263.0px;font-size:11px;line-height:11px;color:#1f7145;letter-spacing:0.00px;font-family:'DejaVu Sans','Liberation Sans',sans-serif;">I</span>
<span class="t" style="left:917.3px;top:263.0px;font-size:11px;line-height:11px;color:#1f7145;letter-spacing:0.00px;font-family:'DejaVu Sans','Liberation Sans',sans-serif;">J</span>
<span class="t" style="left:1009.1px;top:263.0px;font-size:11px;line-height:11px;color:#1f7145;letter-spacing:0.00px;font-family:'DejaVu Sans','Liberation Sans',sans-serif;">K</span>
<span class="t" style="left:1103.4px;top:263.0px;font-size:11px;line-height:11px;color:#1f7145;letter-spacing:0.00px;font-family:'DejaVu Sans','Liberation Sans',sans-serif;">L</span>
<span class="t" style="left:1195.4px;top:263.0px;font-size:11px;line-height:11px;color:#1f7145;letter-spacing:0.00px;font-family:'DejaVu Sans','Liberation Sans',sans-serif;">M</span>
<span class="t" style="left:1289.8px;top:263.0px;font-size:11px;line-height:11px;color:#1f7145;letter-spacing:0.00px;font-family:'DejaVu Sans','Liberation Sans',sans-serif;">N</span>
<span class="t" style="left:1383.3px;top:263.0px;font-size:11px;line-height:11px;color:#1f7145;letter-spacing:0.00px;font-family:'DejaVu Sans','Liberation Sans',sans-serif;">O</span>
<span class="t" style="left:1478.1px;top:263.0px;font-size:11px;line-height:11px;color:#1f7145;letter-spacing:0.00px;font-family:'DejaVu Sans','Liberation Sans',sans-serif;">P</span>
<span class="t" style="left:1570.8px;top:263.0px;font-size:11px;line-height:11px;color:#1f7145;letter-spacing:0.00px;font-family:'DejaVu Sans','Liberation Sans',sans-serif;">Q</span>
<svg class="b" style="left:0.0px;top:0.0px;" width="1" height="1" viewBox="0 0 1 1"><path d="M122.0 261V275" stroke="#b9b9b9" stroke-width="1"/><path d="M215.8 261V275" stroke="#b9b9b9" stroke-width="1"/><path d="M309.6 261V275" stroke="#b9b9b9" stroke-width="1"/><path d="M403.3 261V275" stroke="#b9b9b9" stroke-width="1"/><path d="M497.1 261V275" stroke="#b9b9b9" stroke-width="1"/><path d="M590.8 261V275" stroke="#b9b9b9" stroke-width="1"/><path d="M684.5 261V275" stroke="#b9b9b9" stroke-width="1"/><path d="M778.3 261V275" stroke="#b9b9b9" stroke-width="1"/><path d="M872.0 261V275" stroke="#b9b9b9" stroke-width="1"/><path d="M965.8 261V275" stroke="#b9b9b9" stroke-width="1"/><path d="M1059.5 261V275" stroke="#b9b9b9" stroke-width="1"/><path d="M1153.3 261V275" stroke="#b9b9b9" stroke-width="1"/><path d="M1247.0 261V275" stroke="#b9b9b9" stroke-width="1"/><path d="M1340.8 261V275" stroke="#b9b9b9" stroke-width="1"/><path d="M1434.5 261V275" stroke="#b9b9b9" stroke-width="1"/><path d="M1528.3 261V275" stroke="#b9b9b9" stroke-width="1"/></svg>
<svg class="b" style="left:0.0px;top:0.0px;" width="1" height="1" viewBox="0 0 1 1"><path d="M122.5 277V812M215.5 277V812M309.5 277V812M403.5 277V812M497.5 277V812M590.5 277V812M684.5 277V812M778.5 277V812M872.5 277V812M965.5 277V812M1059.5 277V812M1153.5 277V812M1247.5 277V812M1340.5 277V812M1434.5 277V812M1528.5 277V812" stroke="#d9d9d9" stroke-width="1" fill="none"/><path d="M28.3 313.5H1610.500M28.3 330.5H1610.500M28.3 347.5H1610.500M28.3 375.5H1610.500M28.3 392.5H1610.500M28.3 409.5H1610.500M28.3 426.5H1610.500M28.3 454.5H1610.500M28.3 471.5H1610.500M28.3 488.5H1610.500M28.3 516.5H1610.500M28.3 533.5H1610.500M28.3 551.5H1610.500M28.3 568.5H1610.500M28.3 585.5H1610.500M28.3 602.5H1610.500M28.3 619.5H1610.500M28.3 636.5H1610.500M28.3 653.5H1610.500M28.3 670.5H1610.500M28.3 687.5H1610.500M28.3 704.5H1610.500M28.3 722.5H1610.500M28.3 739.5H1610.500M28.3 756.5H1610.500M28.3 773.5H1610.500M28.3 790.5H1610.500M28.3 807.5H1610.500" stroke="#d9d9d9" stroke-width="1" fill="none"/><path d="M28.3 313.5H1610.500" stroke="#a6a6a6" stroke-width="1"/></svg>
<span class="t" style="left:9.1px;top:294.9px;font-size:11px;line-height:11px;color:#4d4d4d;letter-spacing:0.00px;font-family:'DejaVu Sans','Liberation Sans',sans-serif;letter-spacing:0px;">1</span>
<span class="t" style="left:9.1px;top:316.9px;font-size:11px;line-height:11px;color:#4d4d4d;letter-spacing:0.00px;font-family:'DejaVu Sans','Liberation Sans',sans-serif;letter-spacing:0px;">2</span>
<span class="t" style="left:9.1px;top:333.8px;font-size:11px;line-height:11px;color:#4d4d4d;letter-spacing:0.00px;font-family:'DejaVu Sans','Liberation Sans',sans-serif;letter-spacing:0px;">3</span>
<span class="t" style="left:9.1px;top:358.3px;font-size:11px;line-height:11px;color:#4d4d4d;letter-spacing:0.00px;font-family:'DejaVu Sans','Liberation Sans',sans-serif;letter-spacing:0px;">4</span>
<span class="t" style="left:9.1px;top:379.1px;font-size:11px;line-height:11px;color:#4d4d4d;letter-spacing:0.00px;font-family:'DejaVu Sans','Liberation Sans',sans-serif;letter-spacing:0px;">5</span>
<span class="t" style="left:9.1px;top:396.3px;font-size:11px;line-height:11px;color:#4d4d4d;letter-spacing:0.00px;font-family:'DejaVu Sans','Liberation Sans',sans-serif;letter-spacing:0px;">6</span>
<span class="t" style="left:9.1px;top:413.3px;font-size:11px;line-height:11px;color:#4d4d4d;letter-spacing:0.00px;font-family:'DejaVu Sans','Liberation Sans',sans-serif;letter-spacing:0px;">7</span>
<span class="t" style="left:9.1px;top:437.9px;font-size:11px;line-height:11px;color:#4d4d4d;letter-spacing:0.00px;font-family:'DejaVu Sans','Liberation Sans',sans-serif;letter-spacing:0px;">8</span>
<span class="t" style="left:9.1px;top:458.4px;font-size:11px;line-height:11px;color:#4d4d4d;letter-spacing:0.00px;font-family:'DejaVu Sans','Liberation Sans',sans-serif;letter-spacing:0px;">9</span>
<span class="t" style="left:5.2px;top:475.4px;font-size:11px;line-height:11px;color:#4d4d4d;letter-spacing:0.00px;font-family:'DejaVu Sans','Liberation Sans',sans-serif;letter-spacing:0.9px;">10</span>
<span class="t" style="left:5.2px;top:500.1px;font-size:11px;line-height:11px;color:#4d4d4d;letter-spacing:0.00px;font-family:'DejaVu Sans','Liberation Sans',sans-serif;letter-spacing:0.9px;">11</span>
<span class="t" style="left:5.2px;top:520.5px;font-size:11px;line-height:11px;color:#4d4d4d;letter-spacing:0.00px;font-family:'DejaVu Sans','Liberation Sans',sans-serif;letter-spacing:0.9px;">12</span>
<span class="t" style="left:5.2px;top:537.6px;font-size:11px;line-height:11px;color:#4d4d4d;letter-spacing:0.00px;font-family:'DejaVu Sans','Liberation Sans',sans-serif;letter-spacing:0.9px;">13</span>
<span class="t" style="left:5.2px;top:554.7px;font-size:11px;line-height:11px;color:#4d4d4d;letter-spacing:0.00px;font-family:'DejaVu Sans','Liberation Sans',sans-serif;letter-spacing:0.9px;">14</span>
<span class="t" style="left:5.2px;top:571.8px;font-size:11px;line-height:11px;color:#4d4d4d;letter-spacing:0.00px;font-family:'DejaVu Sans','Liberation Sans',sans-serif;letter-spacing:0.9px;">15</span>
<span class="t" style="left:5.2px;top:588.9px;font-size:11px;line-height:11px;color:#4d4d4d;letter-spacing:0.00px;font-family:'DejaVu Sans','Liberation Sans',sans-serif;letter-spacing:0.9px;">16</span>
<span class="t" style="left:5.2px;top:606.0px;font-size:11px;line-height:11px;color:#4d4d4d;letter-spacing:0.00px;font-family:'DejaVu Sans','Liberation Sans',sans-serif;letter-spacing:0.9px;">17</span>
<span class="t" style="left:5.2px;top:623.1px;font-size:11px;line-height:11px;color:#4d4d4d;letter-spacing:0.00px;font-family:'DejaVu Sans','Liberation Sans',sans-serif;letter-spacing:0.9px;">18</span>
<span class="t" style="left:5.2px;top:640.2px;font-size:11px;line-height:11px;color:#4d4d4d;letter-spacing:0.00px;font-family:'DejaVu Sans','Liberation Sans',sans-serif;letter-spacing:0.9px;">19</span>
<span class="t" style="left:5.2px;top:657.3px;font-size:11px;line-height:11px;color:#4d4d4d;letter-spacing:0.00px;font-family:'DejaVu Sans','Liberation Sans',sans-serif;letter-spacing:0.9px;">20</span>
<span class="t" style="left:5.2px;top:674.4px;font-size:11px;line-height:11px;color:#4d4d4d;letter-spacing:0.00px;font-family:'DejaVu Sans','Liberation Sans',sans-serif;letter-spacing:0.9px;">21</span>
<span class="t" style="left:5.2px;top:691.5px;font-size:11px;line-height:11px;color:#4d4d4d;letter-spacing:0.00px;font-family:'DejaVu Sans','Liberation Sans',sans-serif;letter-spacing:0.9px;">22</span>
<span class="t" style="left:5.2px;top:708.6px;font-size:11px;line-height:11px;color:#4d4d4d;letter-spacing:0.00px;font-family:'DejaVu Sans','Liberation Sans',sans-serif;letter-spacing:0.9px;">23</span>
<span class="t" style="left:5.2px;top:725.7px;font-size:11px;line-height:11px;color:#4d4d4d;letter-spacing:0.00px;font-family:'DejaVu Sans','Liberation Sans',sans-serif;letter-spacing:0.9px;">24</span>
<span class="t" style="left:5.2px;top:742.8px;font-size:11px;line-height:11px;color:#4d4d4d;letter-spacing:0.00px;font-family:'DejaVu Sans','Liberation Sans',sans-serif;letter-spacing:0.9px;">25</span>
<span class="t" style="left:5.2px;top:759.9px;font-size:11px;line-height:11px;color:#4d4d4d;letter-spacing:0.00px;font-family:'DejaVu Sans','Liberation Sans',sans-serif;letter-spacing:0.9px;">26</span>
<span class="t" style="left:5.2px;top:777.0px;font-size:11px;line-height:11px;color:#4d4d4d;letter-spacing:0.00px;font-family:'DejaVu Sans','Liberation Sans',sans-serif;letter-spacing:0.9px;">27</span>
<span class="t" style="left:5.2px;top:794.1px;font-size:11px;line-height:11px;color:#4d4d4d;letter-spacing:0.00px;font-family:'DejaVu Sans','Liberation Sans',sans-serif;letter-spacing:0.9px;">28</span>
<svg class="b" style="left:0.0px;top:0.0px;" width="1" height="1" viewBox="0 0 1 1"><path d="M0 313.5H28.3" stroke="#c9c9c9" stroke-width="1"/><path d="M0 330.5H28.3" stroke="#c9c9c9" stroke-width="1"/><path d="M0 347.5H28.3" stroke="#c9c9c9" stroke-width="1"/><path d="M0 375.5H28.3" stroke="#c9c9c9" stroke-width="1"/><path d="M0 392.5H28.3" stroke="#c9c9c9" stroke-width="1"/><path d="M0 409.5H28.3" stroke="#c9c9c9" stroke-width="1"/><path d="M0 426.5H28.3" stroke="#c9c9c9" stroke-width="1"/><path d="M0 454.5H28.3" stroke="#c9c9c9" stroke-width="1"/><path d="M0 471.5H28.3" stroke="#c9c9c9" stroke-width="1"/><path d="M0 488.5H28.3" stroke="#c9c9c9" stroke-width="1"/><path d="M0 516.5H28.3" stroke="#c9c9c9" stroke-width="1"/><path d="M0 533.5H28.3" stroke="#c9c9c9" stroke-width="1"/><path d="M0 551.5H28.3" stroke="#c9c9c9" stroke-width="1"/><path d="M0 568.5H28.3" stroke="#c9c9c9" stroke-width="1"/><path d="M0 585.5H28.3" stroke="#c9c9c9" stroke-width="1"/><path d="M0 602.5H28.3" stroke="#c9c9c9" stroke-width="1"/><path d="M0 619.5H28.3" stroke="#c9c9c9" stroke-width="1"/><path d="M0 636.5H28.3" stroke="#c9c9c9" stroke-width="1"/><path d="M0 653.5H28.3" stroke="#c9c9c9" stroke-width="1"/><path d="M0 670.5H28.3" stroke="#c9c9c9" stroke-width="1"/><path d="M0 687.5H28.3" stroke="#c9c9c9" stroke-width="1"/><path d="M0 704.5H28.3" stroke="#c9c9c9" stroke-width="1"/><path d="M0 722.5H28.3" stroke="#c9c9c9" stroke-width="1"/><path d="M0 739.5H28.3" stroke="#c9c9c9" stroke-width="1"/><path d="M0 756.5H28.3" stroke="#c9c9c9" stroke-width="1"/><path d="M0 773.5H28.3" stroke="#c9c9c9" stroke-width="1"/><path d="M0 790.5H28.3" stroke="#c9c9c9" stroke-width="1"/><path d="M0 807.5H28.3" stroke="#c9c9c9" stroke-width="1"/></svg>
<div class="b" style="left:27.7px;top:276.5px;width:1.0px;height:535.8px;background:#bdbdbd;"></div>
<div class="b" style="left:28.3px;top:275.2px;width:1582.2px;height:1.6px;background:#1f7145;"></div>
<div class="b" style="left:1610.2px;top:276.8px;width:1.0px;height:535.5px;background:#bdbdbd;"></div>
<div class="b" style="left:29.0px;top:277.0px;width:280.0px;height:36.0px;background:#fff;"></div>
<div class="b" style="left:29.0px;top:314.0px;width:280.0px;height:16.0px;background:#fff;"></div>
<div class="b" style="left:29.0px;top:348.0px;width:92.0px;height:27.0px;background:#fff;"></div>
<div class="b" style="left:29.0px;top:376.0px;width:280.0px;height:16.0px;background:#fff;"></div>
<div class="b" style="left:29.0px;top:393.0px;width:186.0px;height:16.0px;background:#fff;"></div>
<div class="b" style="left:29.0px;top:427.0px;width:280.0px;height:27.0px;background:#fff;"></div>
<div class="b" style="left:29.0px;top:455.0px;width:1123.0px;height:16.0px;background:#fff;"></div>
<div class="b" style="left:29.0px;top:489.0px;width:92.0px;height:27.0px;background:#fff;"></div>
<div class="b" style="left:592.0px;top:489.0px;width:92.0px;height:27.0px;background:#fff;"></div>
<span class="t" style="left:32.6px;top:284.1px;font-size:23.8px;line-height:23.8px;color:#000;letter-spacing:-0.32px;font-weight:700;font-family:'DejaVu Sans','Liberation Sans',sans-serif;">Sunburst Diagrams</span>
<span class="t" style="left:31.3px;top:317.6px;font-size:10.3px;line-height:10.3px;color:#262626;letter-spacing:0.28px;font-family:'DejaVu Sans','Liberation Sans',sans-serif;">a.k.a., radial charts or multi-level donut charts</span>
<span class="t" style="left:32.6px;top:354.4px;font-size:17px;line-height:17px;color:#000;letter-spacing:0.26px;font-weight:700;font-family:'DejaVu Sans','Liberation Sans',sans-serif;">Uses</span>
<span class="t" style="left:31.6px;top:380.2px;font-size:10.3px;line-height:10.3px;color:#262626;letter-spacing:0.44px;font-family:'DejaVu Sans','Liberation Sans',sans-serif;">Nested/hierarchical part-to-whole patterns.</span>
<span class="t" style="left:31.6px;top:397.3px;font-size:10.3px;line-height:10.3px;color:#262626;letter-spacing:0.36px;font-family:'DejaVu Sans','Liberation Sans',sans-serif;">Kind of like a round tree map.</span>
<span class="t" style="left:32.6px;top:433.6px;font-size:17px;line-height:17px;color:#000;letter-spacing:0.33px;font-weight:700;font-family:'DejaVu Sans','Liberation Sans',sans-serif;">Real-Life Examples</span>
<span class="t" style="left:31.6px;top:459.3px;font-size:10.3px;line-height:10.3px;color:#2f75cf;letter-spacing:0.21px;font-family:'DejaVu Sans','Liberation Sans',sans-serif;text-decoration:underline;">https://www.google.com/search?q=sunburst+diagram&amp;rlz=1C1CHBF_enUS814US814&amp;oq=su&amp;aqs=chrome.0.69i59j69i57j46i67i175i199j46i67i433j69i60l4.1173j0j7&amp;sourceid=chrome&amp;ie=UTF-8</span>
<span class="t" style="left:32.6px;top:495.2px;font-size:17px;line-height:17px;color:#000;letter-spacing:0.27px;font-weight:700;font-family:'DejaVu Sans','Liberation Sans',sans-serif;">Before</span>
<span class="t" style="left:595.2px;top:495.2px;font-size:17px;line-height:17px;color:#000;letter-spacing:0.50px;font-weight:700;font-family:'DejaVu Sans','Liberation Sans',sans-serif;">After</span>
<div class="b" style="left:28.9px;top:534.5px;width:367.6px;height:220.9px;background:#fff;border:1px solid #ededed;box-sizing:border-box;"></div>
<span class="t" style="left:175.1px;top:541.1px;font-size:14px;line-height:14px;color:#7a7a7a;letter-spacing:0.12px;font-family:'DejaVu Sans','Liberation Sans',sans-serif;">Chart Title</span>
<svg class="b" style="left:0.0px;top:0.0px;" width="1" height="1" viewBox="0 0 1 1"><g stroke="#fff" stroke-width="1.2" stroke-linejoin="round"><path d="M212.40 608.40A46.5 46.5 0 0 1 232.78 696.69L222.92 676.47A24 24 0 0 0 212.40 630.90Z" fill="#3c78d8"/><path d="M232.78 696.69A46.5 46.5 0 0 1 166.47 662.17L188.70 658.65A24 24 0 0 0 222.92 676.47Z" fill="#6430c6"/><path d="M166.47 662.17A46.5 46.5 0 0 1 191.29 613.47L201.50 633.52A24 24 0 0 0 188.70 658.65Z" fill="#b715b9"/><path d="M191.29 613.47A46.5 46.5 0 0 1 212.40 608.40L212.40 630.90A24 24 0 0 0 201.50 633.52Z" fill="#12bd7e"/><path d="M212.40 585.10A69.8 69.8 0 0 1 275.66 625.40L254.54 635.25A46.5 46.5 0 0 0 212.40 608.40Z" fill="#3c78d8"/><path d="M275.66 625.40A69.8 69.8 0 0 1 274.03 687.67L253.46 676.73A46.5 46.5 0 0 0 254.54 635.25Z" fill="#3c78d8"/><path d="M274.03 687.67A69.8 69.8 0 0 1 243.00 717.64L232.78 696.69A46.5 46.5 0 0 0 253.46 676.73Z" fill="#3c78d8"/><path d="M243.00 717.64A69.8 69.8 0 0 1 166.15 707.18L181.59 689.73A46.5 46.5 0 0 0 232.78 696.69Z" fill="#6430c6"/><path d="M166.15 707.18A69.8 69.8 0 0 1 143.46 665.82L166.47 662.17A46.5 46.5 0 0 0 181.59 689.73Z" fill="#6430c6"/><path d="M143.46 665.82A69.8 69.8 0 0 1 149.66 624.30L170.61 634.52A46.5 46.5 0 0 0 166.47 662.17Z" fill="#b715b9"/><path d="M149.66 624.30A69.8 69.8 0 0 1 180.71 592.71L191.29 613.47A46.5 46.5 0 0 0 170.61 634.52Z" fill="#b715b9"/><path d="M180.71 592.71A69.8 69.8 0 0 1 203.41 585.68L206.41 608.79A46.5 46.5 0 0 0 191.29 613.47Z" fill="#12bd7e"/><path d="M203.41 585.68A69.8 69.8 0 0 1 212.40 585.10L212.40 608.40A46.5 46.5 0 0 0 206.41 608.79Z" fill="#12bd7e"/><path d="M212.40 562.00A92.9 92.9 0 0 1 251.66 570.70L241.90 591.64A69.8 69.8 0 0 0 212.40 585.10Z" fill="#3c78d8"/><path d="M251.66 570.70A92.9 92.9 0 0 1 284.19 595.93L266.34 610.60A69.8 69.8 0 0 0 241.90 591.64Z" fill="#3c78d8"/><path d="M284.19 595.93A92.9 92.9 0 0 1 292.36 607.61L272.48 619.37A69.8 69.8 0 0 0 266.34 610.60Z" fill="#3c78d8"/><path d="M292.36 607.61A92.9 92.9 0 0 1 296.60 615.64L275.66 625.40A69.8 69.8 0 0 0 272.48 619.37Z" fill="#3c78d8"/><path d="M294.80 697.80A92.9 92.9 0 0 1 277.86 720.82L261.58 704.43A69.8 69.8 0 0 0 274.31 687.13Z" fill="#3c78d8"/><path d="M277.86 720.82A92.9 92.9 0 0 1 259.27 735.11L247.62 715.17A69.8 69.8 0 0 0 261.58 704.43Z" fill="#3c78d8"/><path d="M259.27 735.11A92.9 92.9 0 0 1 253.12 738.40L243.00 717.64A69.8 69.8 0 0 0 247.62 715.17Z" fill="#3c78d8"/><path d="M253.12 738.40A92.9 92.9 0 0 1 221.79 747.32L219.45 724.34A69.8 69.8 0 0 0 243.00 717.64Z" fill="#6430c6"/><path d="M221.79 747.32A92.9 92.9 0 0 1 194.67 746.09L199.08 723.42A69.8 69.8 0 0 0 219.45 724.34Z" fill="#6430c6"/><path d="M194.67 746.09A92.9 92.9 0 0 1 170.22 737.67L180.71 717.09A69.8 69.8 0 0 0 199.08 723.42Z" fill="#6430c6"/><path d="M170.22 737.67A92.9 92.9 0 0 1 157.79 730.06L171.37 711.37A69.8 69.8 0 0 0 180.71 717.09Z" fill="#6430c6"/><path d="M157.79 730.06A92.9 92.9 0 0 1 150.84 724.48L166.15 707.18A69.8 69.8 0 0 0 171.37 711.37Z" fill="#6430c6"/><path d="M120.64 669.43A92.9 92.9 0 0 1 122.26 632.43L144.67 638.01A69.8 69.8 0 0 0 143.46 665.82Z" fill="#b715b9"/><path d="M122.26 632.43A92.9 92.9 0 0 1 126.89 618.60L148.15 627.63A69.8 69.8 0 0 0 144.67 638.01Z" fill="#b715b9"/><path d="M126.89 618.60A92.9 92.9 0 0 1 128.90 614.18L149.66 624.30A69.8 69.8 0 0 0 148.15 627.63Z" fill="#b715b9"/><path d="M128.90 614.18A92.9 92.9 0 0 1 151.45 584.79L166.61 602.22A69.8 69.8 0 0 0 149.66 624.30Z" fill="#b715b9"/><path d="M151.45 584.79A92.9 92.9 0 0 1 170.22 572.13L180.71 592.71A69.8 69.8 0 0 0 166.61 602.22Z" fill="#b715b9"/></g></svg>
<div class="b" style="left:601.0px;top:526.0px;width:475.0px;height:286.2px;background:#fff;"></div>
<svg class="b" style="left:0.0px;top:0.0px;overflow:hidden;" width="1637" height="812.2" viewBox="0 0 1637 812.200"><g><g stroke="#fff" stroke-width="1.3" stroke-linejoin="round"><path d="M776.70 636.90A84.5 84.5 0 0 1 817.02 795.66L796.84 758.49A42.2 42.2 0 0 0 776.70 679.20Z" fill="#3c78d8"/><path d="M817.02 795.66A84.5 84.5 0 0 1 692.71 712.13L734.75 716.77A42.2 42.2 0 0 0 796.84 758.49Z" fill="#6430c6"/><path d="M692.71 712.13A84.5 84.5 0 0 1 738.34 646.11L757.54 683.80A42.2 42.2 0 0 0 734.75 716.77Z" fill="#b715b9"/><path d="M738.34 646.11A84.5 84.5 0 0 1 776.70 636.90L776.70 679.20A42.2 42.2 0 0 0 757.54 683.80Z" fill="#12bd7e"/><path d="M776.70 595.40A126 126 0 0 1 889.95 666.17L852.65 684.36A84.5 84.5 0 0 0 776.70 636.90Z" fill="#3c78d8"/><path d="M889.95 666.17A126 126 0 0 1 889.95 776.63L852.65 758.44A84.5 84.5 0 0 0 852.65 684.36Z" fill="#3c78d8"/><path d="M889.95 776.63A126 126 0 0 1 836.82 832.13L817.02 795.66A84.5 84.5 0 0 0 852.65 758.44Z" fill="#3c78d8"/><path d="M836.82 832.13A126 126 0 0 1 669.85 788.17L705.04 766.18A84.5 84.5 0 0 0 817.02 795.66Z" fill="#6430c6"/><path d="M669.85 788.17A126 126 0 0 1 651.46 707.57L692.71 712.13A84.5 84.5 0 0 0 705.04 766.18Z" fill="#6430c6"/><path d="M651.46 707.57A126 126 0 0 1 683.80 636.28L714.40 664.31A84.5 84.5 0 0 0 692.71 712.13Z" fill="#b715b9"/><path d="M683.80 636.28A126 126 0 0 1 719.50 609.13L738.34 646.11A84.5 84.5 0 0 0 714.40 664.31Z" fill="#b715b9"/><path d="M719.50 609.13A126 126 0 0 1 759.16 596.63L764.94 637.72A84.5 84.5 0 0 0 738.34 646.11Z" fill="#12bd7e"/><path d="M759.16 596.63A126 126 0 0 1 776.70 595.40L776.70 636.90A84.5 84.5 0 0 0 764.94 637.72Z" fill="#12bd7e"/><path d="M776.70 553.10A168.3 168.3 0 0 1 848.89 569.37L830.75 607.58A126 126 0 0 0 776.70 595.40Z" fill="#3c78d8"/><path d="M848.89 569.37A168.3 168.3 0 0 1 904.68 612.10L872.51 639.57A126 126 0 0 0 830.75 607.58Z" fill="#3c78d8"/><path d="M904.68 612.10A168.3 168.3 0 0 1 919.43 632.21L883.55 654.63A126 126 0 0 0 872.51 639.57Z" fill="#3c78d8"/><path d="M919.43 632.21A168.3 168.3 0 0 1 927.97 647.62L889.95 666.17A126 126 0 0 0 883.55 654.63Z" fill="#3c78d8"/><path d="M927.97 795.18A168.3 168.3 0 0 1 899.79 836.18L868.85 807.33A126 126 0 0 0 889.95 776.63Z" fill="#3c78d8"/><path d="M899.79 836.18A168.3 168.3 0 0 1 868.36 862.55L845.32 827.07A126 126 0 0 0 868.85 807.33Z" fill="#3c78d8"/><path d="M868.36 862.55A168.3 168.3 0 0 1 857.01 869.30L836.82 832.13A126 126 0 0 0 845.32 827.07Z" fill="#3c78d8"/><path d="M857.01 869.30A168.3 168.3 0 0 1 805.92 887.14L798.58 845.49A126 126 0 0 0 836.82 832.13Z" fill="#6430c6"/><path d="M805.92 887.14A168.3 168.3 0 0 1 753.28 888.06L759.16 846.17A126 126 0 0 0 798.58 845.49Z" fill="#6430c6"/><path d="M753.28 888.06A168.3 168.3 0 0 1 702.92 872.67L721.47 834.65A126 126 0 0 0 759.16 846.17Z" fill="#6430c6"/><path d="M702.92 872.67A168.3 168.3 0 0 1 657.69 840.41L687.60 810.50A126 126 0 0 0 721.47 834.65Z" fill="#6430c6"/><path d="M657.69 840.41A168.3 168.3 0 0 1 633.97 810.59L669.85 788.17A126 126 0 0 0 687.60 810.50Z" fill="#6430c6"/><path d="M609.42 702.93A168.3 168.3 0 0 1 634.76 630.97L670.43 653.70A126 126 0 0 0 651.46 707.57Z" fill="#b715b9"/><path d="M634.76 630.97A168.3 168.3 0 0 1 644.08 617.78L677.41 643.83A126 126 0 0 0 670.43 653.70Z" fill="#b715b9"/><path d="M644.08 617.78A168.3 168.3 0 0 1 652.62 607.70L683.80 636.28A126 126 0 0 0 677.41 643.83Z" fill="#b715b9"/><path d="M652.62 607.70A168.3 168.3 0 0 1 685.04 580.25L708.08 615.73A126 126 0 0 0 683.80 636.28Z" fill="#b715b9"/><path d="M685.04 580.25A168.3 168.3 0 0 1 700.29 571.44L719.50 609.13A126 126 0 0 0 708.08 615.73Z" fill="#b715b9"/></g><text x="810.5" y="577.5" transform="rotate(-76.8 810.5 577.5)" font-size="9.4" font-weight="700" fill="#fff" text-anchor="middle" dominant-baseline="central" textLength="35" lengthAdjust="spacingAndGlyphs" font-family="DejaVu Sans,Liberation Sans,sans-serif">Leaf 4</text><text x="866.8" y="604.0" transform="rotate(-52.5 866.8 604.0)" font-size="9.4" font-weight="700" fill="#fff" text-anchor="middle" dominant-baseline="central" textLength="35" lengthAdjust="spacingAndGlyphs" font-family="DejaVu Sans,Liberation Sans,sans-serif">Leaf 3</text><text x="897.7" y="633.8" transform="rotate(-35.9 897.7 633.8)" font-size="9.4" font-weight="700" fill="#fff" text-anchor="middle" dominant-baseline="central" textLength="35" lengthAdjust="spacingAndGlyphs" font-family="DejaVu Sans,Liberation Sans,sans-serif">Leaf 1</text><text x="833.6" y="630.8" transform="rotate(-57.9 833.6 630.8)" font-size="9.4" font-weight="700" fill="#fff" text-anchor="middle" dominant-baseline="central" textLength="39.5" lengthAdjust="spacingAndGlyphs" font-family="DejaVu Sans,Liberation Sans,sans-serif">Twig 2</text><text x="883.0" y="721.4" transform="rotate(0.0 883.0 721.4)" font-size="9.4" font-weight="700" fill="#fff" text-anchor="middle" dominant-baseline="central" textLength="37.5" lengthAdjust="spacingAndGlyphs" font-family="DejaVu Sans,Liberation Sans,sans-serif">Twig 3</text><text x="853.4" y="796.5" transform="rotate(44.4 853.4 796.5)" font-size="9.4" font-weight="700" fill="#fff" text-anchor="middle" dominant-baseline="central" textLength="38.5" lengthAdjust="spacingAndGlyphs" font-family="DejaVu Sans,Liberation Sans,sans-serif">Twig 1</text><text x="899.0" y="804.8" transform="rotate(34.3 899.0 804.8)" font-size="9.4" font-weight="700" fill="#fff" text-anchor="middle" dominant-baseline="central" textLength="35" lengthAdjust="spacingAndGlyphs" font-family="DejaVu Sans,Liberation Sans,sans-serif">Leaf 1</text><text x="673.5" y="746.4" transform="rotate(346.4 673.5 746.4)" font-size="9.4" font-weight="700" fill="#fff" text-anchor="middle" dominant-baseline="central" textLength="37.5" lengthAdjust="spacingAndGlyphs" font-family="DejaVu Sans,Liberation Sans,sans-serif">Twig 1</text><text x="655.9" y="808.6" transform="rotate(324.2 655.9 808.6)" font-size="9.4" font-weight="700" fill="#fff" text-anchor="middle" dominant-baseline="central" textLength="35" lengthAdjust="spacingAndGlyphs" font-family="DejaVu Sans,Liberation Sans,sans-serif">Leaf 1</text><text x="749.5" y="822.8" transform="rotate(285.0 749.5 822.8)" font-size="9.4" font-weight="700" fill="#fff" text-anchor="middle" dominant-baseline="central" textLength="38.5" lengthAdjust="spacingAndGlyphs" font-family="DejaVu Sans,Liberation Sans,sans-serif">Twig 2</text><text x="637.0" y="669.7" transform="rotate(380.3 637.0 669.7)" font-size="9.4" font-weight="700" fill="#fff" text-anchor="middle" dominant-baseline="central" textLength="35" lengthAdjust="spacingAndGlyphs" font-family="DejaVu Sans,Liberation Sans,sans-serif">Leaf 2</text><text x="682.0" y="678.2" transform="rotate(384.5 682.0 678.2)" font-size="9.4" font-weight="700" fill="#fff" text-anchor="middle" dominant-baseline="central" textLength="39.5" lengthAdjust="spacingAndGlyphs" font-family="DejaVu Sans,Liberation Sans,sans-serif">Twig 2</text><text x="714.2" y="637.5" transform="rotate(413.3 714.2 637.5)" font-size="9.4" font-weight="700" fill="#fff" text-anchor="middle" dominant-baseline="central" textLength="37" lengthAdjust="spacingAndGlyphs" font-family="DejaVu Sans,Liberation Sans,sans-serif">Twig 1</text><text x="680.6" y="610.4" transform="rotate(409.1 680.6 610.4)" font-size="9.4" font-weight="700" fill="#fff" text-anchor="middle" dominant-baseline="central" textLength="34" lengthAdjust="spacingAndGlyphs" font-family="DejaVu Sans,Liberation Sans,sans-serif">Leaf 1</text><text x="704.2" y="593.2" transform="rotate(420.5 704.2 593.2)" font-size="9.4" font-weight="700" fill="#fff" text-anchor="middle" dominant-baseline="central" textLength="34" lengthAdjust="spacingAndGlyphs" font-family="DejaVu Sans,Liberation Sans,sans-serif">Leaf 2</text><text x="742.4" y="622.8" transform="rotate(430.8 742.4 622.8)" font-size="9.4" font-weight="700" fill="#fff" text-anchor="middle" dominant-baseline="central" textLength="37" lengthAdjust="spacingAndGlyphs" font-family="DejaVu Sans,Liberation Sans,sans-serif">Twig 2</text><text x="760.1" y="657.3" transform="rotate(435.5 760.1 657.3)" font-size="9.4" font-weight="700" fill="#fff" text-anchor="middle" dominant-baseline="central" textLength="33.5" lengthAdjust="spacingAndGlyphs" font-family="DejaVu Sans,Liberation Sans,sans-serif">Bran...</text></g></svg>
<div class="b" style="left:911.3px;top:570.7px;width:36.7px;height:0.8px;background:#d9d9d9;"></div>
<span class="t" style="left:958.7px;top:567.2px;font-size:11.2px;line-height:11.2px;color:#3c78d8;letter-spacing:-0.50px;font-weight:700;font-family:'DejaVu Sans','Liberation Sans',sans-serif;">Branch 2</span>
<span class="t" style="left:1014.2px;top:567.2px;font-size:11.2px;line-height:11.2px;color:#444;letter-spacing:0.10px;font-family:'DejaVu Sans','Liberation Sans',sans-serif;">makes</span>
<span class="t" style="left:958.7px;top:581.0px;font-size:11.2px;line-height:11.2px;color:#444;letter-spacing:0.15px;font-family:'DejaVu Sans','Liberation Sans',sans-serif;">up</span>
<span class="t" style="left:977.6px;top:581.0px;font-size:11.2px;line-height:11.2px;color:#3c78d8;letter-spacing:-1.20px;font-weight:700;font-family:'DejaVu Sans','Liberation Sans',sans-serif;">42%</span>
<span class="t" style="left:1004.1px;top:581.0px;font-size:11.2px;line-height:11.2px;color:#444;letter-spacing:-0.09px;font-family:'DejaVu Sans','Liberation Sans',sans-serif;">of the</span>
<span class="t" style="left:958.7px;top:594.4px;font-size:11.2px;line-height:11.2px;color:#444;letter-spacing:-0.10px;font-family:'DejaVu Sans','Liberation Sans',sans-serif;">entire project.</span>
<div class="b" style="left:1613.5px;top:261.0px;width:20.5px;height:551.3px;background:#d0d0d0;"></div>
<div class="b" style="left:1613.5px;top:261.4px;width:20.8px;height:20.2px;background:#fff;border:1px solid #c4c4c4;box-sizing:border-box;"></div>
<svg class="b" style="left:1619.5px;top:268.8px;" width="9" height="5" viewBox="0 0 9 5"><path d="M0 5L4.500 0 9 5z" fill="#555"/></svg>
<div class="b" style="left:1613.5px;top:282.2px;width:20.8px;height:25.1px;background:#fff;border:1px solid #c4c4c4;box-sizing:border-box;"></div>
<div class="b" style="left:1613.5px;top:792.5px;width:20.8px;height:20.0px;background:#fff;border:1px solid #c4c4c4;box-sizing:border-box;"></div>
<svg class="b" style="left:1619.5px;top:800.0px;" width="9" height="5" viewBox="0 0 9 5"><path d="M0 0L4.500 5 9 0z" fill="#555"/></svg>
<div class="b" style="left:0.0px;top:812.3px;width:1637.0px;height:28.9px;background:#e5e5e5;"></div>
<div class="b" style="left:0.0px;top:812.3px;width:1611.0px;height:1.0px;background:#c6c6c6;"></div>
<svg class="b" style="left:24.5px;top:821.5px;" width="6" height="9" viewBox="0 0 6 9"><path d="M5.500 0L0 4.500 5.500 9z" fill="#c8c8c8"/></svg>
<svg class="b" style="left:53.5px;top:821.0px;" width="6" height="10" viewBox="0 0 6 10"><path d="M0 0l6 5-6 5z" fill="#217346"/></svg>
<div class="b" style="left:102.7px;top:816.0px;width:88.7px;height:22.6px;background:#ffff00;"></div>
<span class="t" style="left:113.7px;top:817.5px;font-size:16px;line-height:16px;color:#111;letter-spacing:0.21px;">Contents</span>
<div class="b" style="left:101.2px;top:818.0px;width:1.0px;height:20.5px;background:#ababab;"></div>
<div class="b" style="left:193.9px;top:818.0px;width:1.0px;height:20.5px;background:#ababab;"></div>
<div class="b" style="left:275.1px;top:818.0px;width:1.0px;height:20.5px;background:#ababab;"></div>
<div class="b" style="left:386.8px;top:818.0px;width:1.0px;height:20.5px;background:#ababab;"></div>
<div class="b" style="left:485.5px;top:818.0px;width:1.0px;height:20.5px;background:#ababab;"></div>
<div class="b" style="left:600.7px;top:818.0px;width:1.0px;height:20.5px;background:#ababab;"></div>
<div class="b" style="left:646.8px;top:818.0px;width:1.0px;height:20.5px;background:#ababab;"></div>
<div class="b" style="left:865.9px;top:818.0px;width:1.0px;height:20.5px;background:#ababab;"></div>
<div class="b" style="left:982.2px;top:818.0px;width:1.0px;height:20.5px;background:#ababab;"></div>
<span class="t" style="left:206.4px;top:817.5px;font-size:16px;line-height:16px;color:#444;letter-spacing:-0.45px;">Themes</span>
<span class="t" style="left:289.6px;top:817.5px;font-size:16px;line-height:16px;color:#444;letter-spacing:-0.17px;">Spark Lines</span>
<span class="t" style="left:402.3px;top:817.5px;font-size:16px;line-height:16px;color:#444;letter-spacing:-0.27px;">Data Bars</span>
<span class="t" style="left:501.0px;top:817.5px;font-size:16px;line-height:16px;color:#444;letter-spacing:0.09px;">Heat Tables</span>
<span class="t" style="left:613.7px;top:817.5px;font-size:16px;line-height:16px;color:#444;letter-spacing:-0.51px;">Pie</span>
<span class="t" style="left:659.8px;top:817.5px;font-size:16px;line-height:16px;color:#444;letter-spacing:0.58px;">Donut</span>
<span class="t" style="left:821.5px;top:817.5px;font-size:16px;line-height:16px;color:#444;letter-spacing:-0.10px;">Tree</span>
<span class="t" style="left:880.9px;top:817.5px;font-size:16px;line-height:16px;color:#444;letter-spacing:-0.08px;">Stacked Bar</span>
<span class="t" style="left:998.2px;top:817.5px;font-size:16px;line-height:16px;color:#444;letter-spacing:0.31px;">Diverging Stacked</span>
<div class="b" style="left:718.0px;top:812.3px;width:92.6px;height:26.7px;background:#fff;border-left:1px solid #c6c6c6;border-right:1px solid #c6c6c6;border-bottom:2px solid #217346;box-sizing:border-box;"></div>
<span class="t" style="left:729.0px;top:817.5px;font-size:16px;line-height:16px;color:#1f7145;letter-spacing:0.10px;font-weight:700;">Sunburst</span>
<span class="t" style="left:1148.4px;top:817.5px;font-size:16px;line-height:16px;color:#1f7145;letter-spacing:0.22px;font-weight:700;">...</span>
<svg class="b" style="left:1175.0px;top:817.5px;" width="19" height="19" viewBox="0 0 19 19"><circle cx="9.500" cy="9.500" r="8.700" fill="none" stroke="#777" stroke-width="1.100"/><path d="M5 9.500h9M9.500 5v9" stroke="#777" stroke-width="1.100"/></svg>
<svg class="b" style="left:1212.0px;top:820.0px;" width="3" height="14" viewBox="0 0 3 14"><circle cx="1.500" cy="1.500" r="1" fill="#aaa"/><circle cx="1.500" cy="6.500" r="1" fill="#aaa"/><circle cx="1.500" cy="11.500" r="1" fill="#aaa"/></svg>
<div class="b" style="left:1230.2px;top:817.2px;width:378.3px;height:19.1px;background:#d0d0d0;"></div>
<div class="b" style="left:1230.2px;top:816.8px;width:20.0px;height:19.7px;background:#fff;border:1px solid #c4c4c4;box-sizing:border-box;"></div>
<svg class="b" style="left:1237.5px;top:822.5px;" width="5" height="9" viewBox="0 0 5 9"><path d="M5 0L0 4.500 5 9z" fill="#555"/></svg>
<div class="b" style="left:1250.5px;top:816.8px;width:269.2px;height:19.7px;background:#fff;border:1px solid #c4c4c4;box-sizing:border-box;"></div>
<div class="b" style="left:1588.7px;top:816.8px;width:20.7px;height:19.7px;background:#fff;border:1px solid #c4c4c4;box-sizing:border-box;"></div>
<svg class="b" style="left:1597.0px;top:822.0px;" width="5" height="10" viewBox="0 0 5 10"><path d="M0 0l5 5-5 5z" fill="#555"/></svg>
<div class="b" style="left:0.0px;top:841.2px;width:1637.0px;height:28.6px;background:#f3f2f1;"></div>
<div class="b" style="left:0.0px;top:841.2px;width:1637.0px;height:1.0px;background:#e0e0e0;"></div>
<span class="t" style="left:9.0px;top:849.2px;font-size:13px;line-height:13px;color:#444;letter-spacing:-0.32px;">Ready</span>
<svg class="b" style="left:69.0px;top:849.0px;" width="19" height="16" viewBox="0 0 19 16"><path d="M.6 3.500V.6h17.800v3.500M.6.600V15.400h7M3 4.500h4M3 8h3M3 11.500h3" fill="none" stroke="#555" stroke-width="1.200"/><circle cx="12.500" cy="10" r="5.200" fill="none" stroke="#555" stroke-width="1.300"/><circle cx="12.500" cy="10" r="2.200" fill="#555"/></svg>
<div class="b" style="left:1258.2px;top:842.4px;width:49.9px;height:27.2px;background:#d4d4d4;"></div>
<svg class="b" style="left:1273.0px;top:848.0px;" width="18" height="16" viewBox="0 0 18 16"><path d="M.8.800h16.400v14.400H.8zM.8 5.600h16.400M.8 10.400h16.400M6.300 .8v14.400M11.700 .8v14.400" fill="none" stroke="#555" stroke-width="1.600"/></svg>
<svg class="b" style="left:1325.0px;top:848.0px;" width="18" height="16" viewBox="0 0 18 16"><path d="M.6.600h16.800v14.800H.6z" fill="none" stroke="#555" stroke-width="1.300"/><path d="M4.500 3.500h9v9h-9zM6.500 6h5M6.500 8h5M6.500 10h5" fill="none" stroke="#555" stroke-width="1"/></svg>
<svg class="b" style="left:1376.5px;top:847.0px;" width="18" height="17" viewBox="0 0 18 17"><path d="M.6.600h16.800v15.800H.6zM5.500 .6v7.500h7V.6M9 .6v7.500" fill="none" stroke="#555" stroke-width="1.300"/></svg>
<div class="b" style="left:1417.4px;top:855.2px;width:10.0px;height:1.1px;background:#666;"></div>
<div class="b" style="left:1434.8px;top:855.0px;width:126.3px;height:1.6px;background:#555;"></div>
<div class="b" style="left:1497.0px;top:852.3px;width:1.5px;height:6.9px;background:#555;"></div>
<div class="b" style="left:1467.8px;top:848.0px;width:7.0px;height:15.0px;background:#666;"></div>
<svg class="b" style="left:1567.5px;top:851.0px;" width="10" height="10" viewBox="0 0 10 10"><path d="M0 5h10M5 0v10" stroke="#555" stroke-width="1.200"/></svg>
<span class="t" style="left:1593.8px;top:849.8px;font-size:12.5px;line-height:12.5px;color:#444;letter-spacing:0.16px;">60%</span>
<div class="b" style="left:0.0px;top:869.8px;width:1637.0px;height:9.2px;background:linear-gradient(90deg,#bfe3e3 0,#cde8ea 28%,#d6e6ee 42%,#dbe2f0 55%,#dddcf0 70%,#e3dcee 100%);"></div>
<div class="b" style="left:825.0px;top:869.8px;width:62.0px;height:9.2px;background:#eceff6;"></div>
<div class="b" style="left:62.3px;top:869.8px;width:438.1px;height:9.2px;background:#fff;border:1px solid #c4c4c4;border-bottom:none;box-sizing:border-box;"></div>
<div class="b" style="left:1631.0px;top:871.0px;width:1.0px;height:8.0px;background:#666;"></div>
<span class="t" style="left:1496.0px;top:875.2px;font-size:13px;line-height:13px;color:#222;letter-spacing:0.80px;font-weight:700;">9:00 AM</span>
</div>
</body></html>
